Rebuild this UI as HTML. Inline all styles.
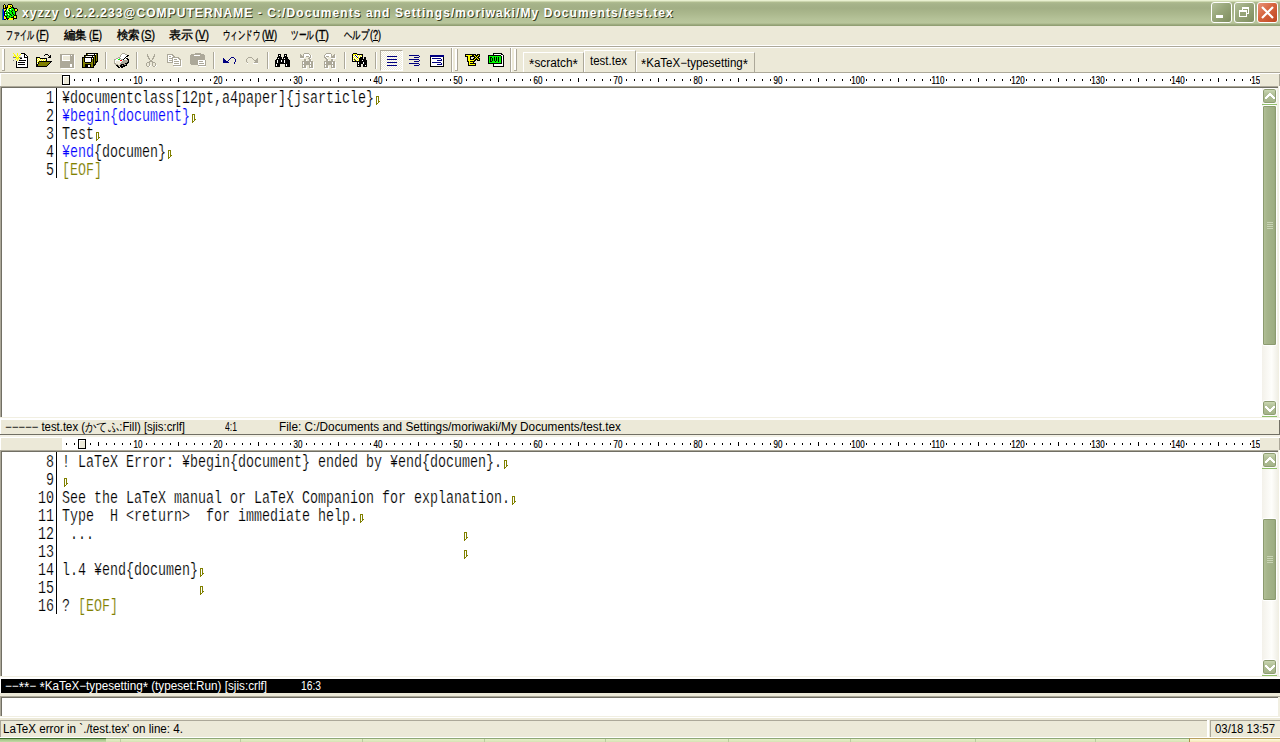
<!DOCTYPE html><html><head><meta charset="utf-8"><style>
*{box-sizing:border-box}
html,body{margin:0;padding:0}
body{width:1280px;height:742px;overflow:hidden;position:relative;background:#ECE9D8;font-family:"Liberation Sans",sans-serif;}
.a{position:absolute}
#title{left:0;top:0;width:1280px;height:26px;background:linear-gradient(to bottom,#E8F0D0 0px,#E8F0D0 1px,#CBD5AE 1px,#CBD5AE 2px,#B0BD90 2px,#A6B38A 4px,#A2AF85 8px,#AAB78C 13px,#B5C298 19px,#B9C69C 23px,#A8B58A 24px,#94A276 25px,#8E9C70 26px)}
#ttext{left:22px;top:6px;color:#fff;font-weight:bold;font-size:12px;line-height:14px;white-space:nowrap;text-shadow:1px 1px 0 #3C3F1E;letter-spacing:1.08px}
.menu{top:28px;font-size:12px;line-height:14px;color:#000;-webkit-text-stroke:0.35px #000;white-space:nowrap;transform-origin:0 0}
.hl{left:0;width:1280px;height:1px}
.ui{font-size:12px;line-height:14px;white-space:nowrap;transform-origin:0 0}
.code{font-family:"Liberation Mono",monospace;font-size:19px;line-height:18px;white-space:pre;color:#000;transform-origin:0 0;-webkit-text-stroke:0.2px #fff}
.st{position:relative;top:2px;font-size:14px;line-height:0}
.rl{font-size:10px;line-height:10px;white-space:nowrap;color:#000;-webkit-text-stroke:0.2px #000;transform-origin:50% 0}
</style></head><body>
<div class="a" id="title"></div>
<div class="a" id="ttext">xyzzy 0.2.2.233@COMPUTERNAME - C:/Documents and Settings/moriwaki/My Documents/test.tex</div>
<svg class="a" style="left:2px;top:4px" width="16" height="16" shape-rendering="crispEdges"><rect x="2" y="0" width="1" height="1" fill="#000000"/><rect x="6" y="0" width="4" height="1" fill="#000000"/><rect x="1" y="1" width="1" height="1" fill="#000000"/><rect x="2" y="1" width="1" height="1" fill="#FFFF00"/><rect x="3" y="1" width="1" height="1" fill="#000000"/><rect x="5" y="1" width="1" height="1" fill="#000000"/><rect x="6" y="1" width="4" height="1" fill="#FFFF00"/><rect x="10" y="1" width="1" height="1" fill="#000000"/><rect x="1" y="2" width="1" height="1" fill="#000000"/><rect x="2" y="2" width="1" height="1" fill="#FFFF00"/><rect x="3" y="2" width="1" height="1" fill="#000000"/><rect x="5" y="2" width="1" height="1" fill="#000000"/><rect x="6" y="2" width="2" height="1" fill="#FFFF00"/><rect x="8" y="2" width="1" height="1" fill="#000000"/><rect x="9" y="2" width="1" height="1" fill="#FFFF00"/><rect x="10" y="2" width="1" height="1" fill="#000000"/><rect x="1" y="3" width="1" height="1" fill="#000000"/><rect x="2" y="3" width="1" height="1" fill="#FFFF00"/><rect x="3" y="3" width="3" height="1" fill="#000000"/><rect x="6" y="3" width="3" height="1" fill="#FFFF00"/><rect x="9" y="3" width="3" height="1" fill="#000000"/><rect x="1" y="4" width="4" height="1" fill="#000000"/><rect x="5" y="4" width="2" height="1" fill="#FFFF00"/><rect x="7" y="4" width="2" height="1" fill="#000000"/><rect x="9" y="4" width="2" height="1" fill="#00FF00"/><rect x="11" y="4" width="4" height="1" fill="#000000"/><rect x="0" y="5" width="1" height="1" fill="#008080"/><rect x="1" y="5" width="1" height="1" fill="#0000FF"/><rect x="2" y="5" width="2" height="1" fill="#FFFF00"/><rect x="4" y="5" width="1" height="1" fill="#000000"/><rect x="5" y="5" width="1" height="1" fill="#FFFFFF"/><rect x="6" y="5" width="2" height="1" fill="#00FF00"/><rect x="8" y="5" width="1" height="1" fill="#FFFFFF"/><rect x="9" y="5" width="3" height="1" fill="#00FF00"/><rect x="12" y="5" width="1" height="1" fill="#000000"/><rect x="13" y="5" width="2" height="1" fill="#FFFF00"/><rect x="15" y="5" width="1" height="1" fill="#000000"/><rect x="0" y="6" width="1" height="1" fill="#008080"/><rect x="1" y="6" width="1" height="1" fill="#0000FF"/><rect x="2" y="6" width="1" height="1" fill="#FFFF00"/><rect x="3" y="6" width="1" height="1" fill="#000000"/><rect x="4" y="6" width="1" height="1" fill="#00FF00"/><rect x="5" y="6" width="1" height="1" fill="#FFFFFF"/><rect x="6" y="6" width="1" height="1" fill="#00FF00"/><rect x="7" y="6" width="1" height="1" fill="#000000"/><rect x="8" y="6" width="2" height="1" fill="#00FF00"/><rect x="10" y="6" width="1" height="1" fill="#000000"/><rect x="11" y="6" width="1" height="1" fill="#00FF00"/><rect x="12" y="6" width="1" height="1" fill="#000000"/><rect x="13" y="6" width="2" height="1" fill="#FFFF00"/><rect x="15" y="6" width="1" height="1" fill="#000000"/><rect x="0" y="7" width="1" height="1" fill="#008080"/><rect x="1" y="7" width="1" height="1" fill="#0000FF"/><rect x="2" y="7" width="2" height="1" fill="#000000"/><rect x="4" y="7" width="2" height="1" fill="#00FF00"/><rect x="6" y="7" width="1" height="1" fill="#FFFFFF"/><rect x="7" y="7" width="2" height="1" fill="#00FF00"/><rect x="9" y="7" width="1" height="1" fill="#000000"/><rect x="10" y="7" width="3" height="1" fill="#00FF00"/><rect x="13" y="7" width="2" height="1" fill="#000000"/><rect x="0" y="8" width="1" height="1" fill="#008080"/><rect x="1" y="8" width="1" height="1" fill="#0000FF"/><rect x="2" y="8" width="1" height="1" fill="#000000"/><rect x="3" y="8" width="1" height="1" fill="#FFFFFF"/><rect x="4" y="8" width="2" height="1" fill="#00FF00"/><rect x="6" y="8" width="1" height="1" fill="#000000"/><rect x="7" y="8" width="3" height="1" fill="#00FF00"/><rect x="10" y="8" width="1" height="1" fill="#000000"/><rect x="11" y="8" width="2" height="1" fill="#00FF00"/><rect x="13" y="8" width="1" height="1" fill="#000000"/><rect x="0" y="9" width="1" height="1" fill="#008080"/><rect x="1" y="9" width="1" height="1" fill="#0000FF"/><rect x="2" y="9" width="1" height="1" fill="#000000"/><rect x="3" y="9" width="1" height="1" fill="#00FF00"/><rect x="4" y="9" width="1" height="1" fill="#000000"/><rect x="5" y="9" width="2" height="1" fill="#00FF00"/><rect x="7" y="9" width="1" height="1" fill="#000000"/><rect x="8" y="9" width="2" height="1" fill="#00FF00"/><rect x="10" y="9" width="1" height="1" fill="#000000"/><rect x="11" y="9" width="2" height="1" fill="#00FF00"/><rect x="13" y="9" width="1" height="1" fill="#000000"/><rect x="0" y="10" width="1" height="1" fill="#008080"/><rect x="1" y="10" width="1" height="1" fill="#0000FF"/><rect x="2" y="10" width="1" height="1" fill="#000000"/><rect x="3" y="10" width="1" height="1" fill="#FFFFFF"/><rect x="4" y="10" width="2" height="1" fill="#00FF00"/><rect x="6" y="10" width="1" height="1" fill="#FFFFFF"/><rect x="7" y="10" width="1" height="1" fill="#00FF00"/><rect x="8" y="10" width="1" height="1" fill="#000000"/><rect x="9" y="10" width="2" height="1" fill="#00FF00"/><rect x="11" y="10" width="1" height="1" fill="#000000"/><rect x="12" y="10" width="1" height="1" fill="#00FF00"/><rect x="13" y="10" width="1" height="1" fill="#000000"/><rect x="0" y="11" width="1" height="1" fill="#008080"/><rect x="1" y="11" width="1" height="1" fill="#0000FF"/><rect x="2" y="11" width="1" height="1" fill="#000000"/><rect x="3" y="11" width="2" height="1" fill="#00FF00"/><rect x="5" y="11" width="1" height="1" fill="#000000"/><rect x="6" y="11" width="3" height="1" fill="#00FF00"/><rect x="9" y="11" width="1" height="1" fill="#000000"/><rect x="10" y="11" width="2" height="1" fill="#00FF00"/><rect x="12" y="11" width="3" height="1" fill="#000000"/><rect x="0" y="12" width="1" height="1" fill="#008080"/><rect x="1" y="12" width="1" height="1" fill="#0000FF"/><rect x="2" y="12" width="1" height="1" fill="#FFFF00"/><rect x="3" y="12" width="2" height="1" fill="#000000"/><rect x="5" y="12" width="2" height="1" fill="#00FF00"/><rect x="7" y="12" width="1" height="1" fill="#000000"/><rect x="8" y="12" width="3" height="1" fill="#00FF00"/><rect x="11" y="12" width="1" height="1" fill="#000000"/><rect x="12" y="12" width="2" height="1" fill="#FFFF00"/><rect x="14" y="12" width="1" height="1" fill="#000000"/><rect x="0" y="13" width="1" height="1" fill="#008080"/><rect x="1" y="13" width="1" height="1" fill="#0000FF"/><rect x="2" y="13" width="2" height="1" fill="#FFFF00"/><rect x="4" y="13" width="1" height="1" fill="#000000"/><rect x="5" y="13" width="4" height="1" fill="#00FF00"/><rect x="9" y="13" width="3" height="1" fill="#000000"/><rect x="12" y="13" width="2" height="1" fill="#FFFF00"/><rect x="14" y="13" width="1" height="1" fill="#000000"/><rect x="0" y="14" width="1" height="1" fill="#008080"/><rect x="1" y="14" width="1" height="1" fill="#0000FF"/><rect x="2" y="14" width="2" height="1" fill="#FFFF00"/><rect x="4" y="14" width="3" height="1" fill="#000000"/><rect x="7" y="14" width="4" height="1" fill="#FFFF00"/><rect x="11" y="14" width="4" height="1" fill="#000000"/><rect x="0" y="15" width="1" height="1" fill="#008080"/><rect x="1" y="15" width="1" height="1" fill="#0000FF"/><rect x="2" y="15" width="2" height="1" fill="#000000"/><rect x="5" y="15" width="1" height="1" fill="#000000"/><rect x="6" y="15" width="5" height="1" fill="#FFFF00"/><rect x="11" y="15" width="1" height="1" fill="#000000"/></svg>
<div class="a" style="left:1211px;top:2px;width:21px;height:21px;border:1px solid #fff;border-radius:3px;background:linear-gradient(135deg,#B3C09A 0%,#9AA87D 40%,#7E8D5E 100%)"></div>
<div class="a" style="left:1234px;top:2px;width:21px;height:21px;border:1px solid #fff;border-radius:3px;background:linear-gradient(135deg,#B3C09A 0%,#9AA87D 40%,#7E8D5E 100%)"></div>
<div class="a" style="left:1257px;top:2px;width:21px;height:21px;border:1px solid #fff;border-radius:3px;background:linear-gradient(135deg,#E8937A 0%,#D6653F 45%,#BF4620 100%)"></div>
<div class="a" style="left:1216px;top:15px;width:7px;height:3px;background:#fff;"></div>
<div class="a" style="left:1242px;top:7px;width:7px;height:7px;border:1px solid #fff;border-top-width:2px"></div>
<div class="a" style="left:1238px;top:9px;width:10px;height:10px;background:transparent;"></div>
<div class="a" style="left:1239px;top:10px;width:8px;height:7px;border:1px solid #fff;border-top-width:2px;background:#95A378"></div>
<svg class="a" style="left:1257px;top:2px" width="21" height="21"><path d="M5 5 L16 16 M16 5 L5 16" stroke="#fff" stroke-width="2.2"/></svg>
<div class="a menu" id="mj0" style="transform:scaleX(0.5833);left:6px">ファイル</div>
<div class="a menu" id="mp0" style="transform:scaleX(0.8473);left:36px">(<u>F</u>)</div>
<div class="a menu" id="mj1" style="transform:scaleX(0.9583);left:64px">編集</div>
<div class="a menu" id="mp1" style="transform:scaleX(0.8117);left:89px">(<u>E</u>)</div>
<div class="a menu" id="mj2" style="transform:scaleX(0.9583);left:117px">検索</div>
<div class="a menu" id="mp2" style="transform:scaleX(0.8741);left:141px">(<u>S</u>)</div>
<div class="a menu" id="mj3" style="transform:scaleX(1.0000);left:169px">表示</div>
<div class="a menu" id="mp3" style="transform:scaleX(0.8741);left:195px">(<u>V</u>)</div>
<div class="a menu" id="mj4" style="transform:scaleX(0.6167);left:223px">ウィンドウ</div>
<div class="a menu" id="mp4" style="transform:scaleX(0.7761);left:262px">(<u>W</u>)</div>
<div class="a menu" id="mj5" style="transform:scaleX(0.6389);left:291px">ツール</div>
<div class="a menu" id="mp5" style="transform:scaleX(0.9124);left:315px">(<u>T</u>)</div>
<div class="a menu" id="mj6" style="transform:scaleX(0.6944);left:344px">ヘルプ</div>
<div class="a menu" id="mp6" style="transform:scaleX(0.7489);left:370px">(<u>?</u>)</div>
<div class="a" style="left:0px;top:45px;width:1280px;height:1px;background:#fff;"></div>
<div class="a" style="left:0px;top:46px;width:1280px;height:1px;background:#ACA899;"></div>
<div class="a" style="left:0px;top:47px;width:1280px;height:1px;background:#fff;"></div>
<div class="a" style="left:0px;top:72px;width:1280px;height:1px;background:#ACA899;"></div>
<div class="a" style="left:0px;top:73px;width:1280px;height:1px;background:#fff;"></div>
<div class="a" style="left:2px;top:49px;width:2px;height:21px;background:#fff;"></div>
<div class="a" style="left:4px;top:49px;width:1px;height:22px;background:#ACA899;"></div>
<div class="a" style="left:2px;top:70px;width:3px;height:1px;background:#ACA899;"></div>
<div class="a" style="left:105px;top:52px;width:1px;height:17px;background:#ACA899;"></div>
<div class="a" style="left:106px;top:52px;width:1px;height:17px;background:#fff;"></div>
<div class="a" style="left:136px;top:52px;width:1px;height:17px;background:#ACA899;"></div>
<div class="a" style="left:137px;top:52px;width:1px;height:17px;background:#fff;"></div>
<div class="a" style="left:213px;top:52px;width:1px;height:17px;background:#ACA899;"></div>
<div class="a" style="left:214px;top:52px;width:1px;height:17px;background:#fff;"></div>
<div class="a" style="left:267px;top:52px;width:1px;height:17px;background:#ACA899;"></div>
<div class="a" style="left:268px;top:52px;width:1px;height:17px;background:#fff;"></div>
<div class="a" style="left:344px;top:52px;width:1px;height:17px;background:#ACA899;"></div>
<div class="a" style="left:345px;top:52px;width:1px;height:17px;background:#fff;"></div>
<div class="a" style="left:375px;top:52px;width:1px;height:17px;background:#ACA899;"></div>
<div class="a" style="left:376px;top:52px;width:1px;height:17px;background:#fff;"></div>
<div class="a" style="left:380px;top:50px;width:23px;height:21px;border-top:1px solid #ACA899;border-left:1px solid #ACA899;border-right:1px solid #fff;border-bottom:1px solid #fff;background-color:#F6F5EF;background-image:repeating-conic-gradient(#ECE9D8 0 25%,#fff 0 50%);background-size:2px 2px"></div>
<div class="a" style="left:451px;top:48px;width:1px;height:24px;background:#ACA899;"></div>
<div class="a" style="left:452px;top:48px;width:1px;height:24px;background:#fff;"></div>
<div class="a" style="left:455px;top:49px;width:2px;height:21px;background:#fff;"></div>
<div class="a" style="left:457px;top:49px;width:1px;height:22px;background:#ACA899;"></div>
<div class="a" style="left:455px;top:70px;width:3px;height:1px;background:#ACA899;"></div>
<div class="a" style="left:510px;top:48px;width:1px;height:24px;background:#ACA899;"></div>
<div class="a" style="left:511px;top:48px;width:1px;height:24px;background:#fff;"></div>
<div class="a" style="left:514px;top:49px;width:2px;height:21px;background:#fff;"></div>
<div class="a" style="left:516px;top:49px;width:1px;height:22px;background:#ACA899;"></div>
<div class="a" style="left:514px;top:70px;width:3px;height:1px;background:#ACA899;"></div>
<svg class="a" style="left:12px;top:52px" width="16" height="16" shape-rendering="crispEdges"><rect x="1" y="1" width="1" height="1" fill="#FFFF00"/><rect x="5" y="1" width="1" height="1" fill="#FFFF00"/><rect x="9" y="1" width="4" height="1" fill="#000000"/><rect x="2" y="2" width="1" height="1" fill="#FFFF00"/><rect x="5" y="2" width="1" height="1" fill="#FFFF00"/><rect x="8" y="2" width="1" height="1" fill="#FFFF00"/><rect x="9" y="2" width="3" height="1" fill="#FFFFFF"/><rect x="12" y="2" width="2" height="1" fill="#000000"/><rect x="2" y="3" width="2" height="1" fill="#FFFF00"/><rect x="5" y="3" width="1" height="1" fill="#FFFF00"/><rect x="7" y="3" width="1" height="1" fill="#FFFF00"/><rect x="9" y="3" width="3" height="1" fill="#FFFFFF"/><rect x="12" y="3" width="1" height="1" fill="#000000"/><rect x="13" y="3" width="1" height="1" fill="#FFFFFF"/><rect x="14" y="3" width="1" height="1" fill="#000000"/><rect x="1" y="4" width="1" height="1" fill="#FFFF00"/><rect x="3" y="4" width="2" height="1" fill="#FFFF00"/><rect x="6" y="4" width="1" height="1" fill="#FFFF00"/><rect x="9" y="4" width="3" height="1" fill="#FFFFFF"/><rect x="12" y="4" width="1" height="1" fill="#000000"/><rect x="13" y="4" width="2" height="1" fill="#FFFFFF"/><rect x="15" y="4" width="1" height="1" fill="#000000"/><rect x="1" y="5" width="3" height="1" fill="#808080"/><rect x="4" y="5" width="3" height="1" fill="#FFFF00"/><rect x="7" y="5" width="3" height="1" fill="#808080"/><rect x="10" y="5" width="2" height="1" fill="#FFFFFF"/><rect x="12" y="5" width="4" height="1" fill="#000000"/><rect x="4" y="6" width="3" height="1" fill="#FFFF00"/><rect x="8" y="6" width="2" height="1" fill="#000000"/><rect x="10" y="6" width="5" height="1" fill="#FFFFFF"/><rect x="15" y="6" width="1" height="1" fill="#000000"/><rect x="3" y="7" width="1" height="1" fill="#FFFF00"/><rect x="5" y="7" width="1" height="1" fill="#FFFF00"/><rect x="7" y="7" width="1" height="1" fill="#FFFF00"/><rect x="9" y="7" width="6" height="1" fill="#FFFFFF"/><rect x="15" y="7" width="1" height="1" fill="#000000"/><rect x="1" y="8" width="1" height="1" fill="#808080"/><rect x="5" y="8" width="1" height="1" fill="#FFFF00"/><rect x="7" y="8" width="7" height="1" fill="#000000"/><rect x="14" y="8" width="1" height="1" fill="#FFFFFF"/><rect x="15" y="8" width="1" height="1" fill="#000000"/><rect x="4" y="9" width="1" height="1" fill="#000000"/><rect x="5" y="9" width="10" height="1" fill="#FFFFFF"/><rect x="15" y="9" width="1" height="1" fill="#000000"/><rect x="4" y="10" width="1" height="1" fill="#000000"/><rect x="5" y="10" width="1" height="1" fill="#FFFFFF"/><rect x="6" y="10" width="7" height="1" fill="#000000"/><rect x="13" y="10" width="2" height="1" fill="#FFFFFF"/><rect x="15" y="10" width="1" height="1" fill="#000000"/><rect x="4" y="11" width="1" height="1" fill="#000000"/><rect x="5" y="11" width="10" height="1" fill="#FFFFFF"/><rect x="15" y="11" width="1" height="1" fill="#000000"/><rect x="4" y="12" width="1" height="1" fill="#000000"/><rect x="5" y="12" width="1" height="1" fill="#FFFFFF"/><rect x="6" y="12" width="7" height="1" fill="#000000"/><rect x="13" y="12" width="2" height="1" fill="#FFFFFF"/><rect x="15" y="12" width="1" height="1" fill="#000000"/><rect x="4" y="13" width="1" height="1" fill="#000000"/><rect x="5" y="13" width="10" height="1" fill="#FFFFFF"/><rect x="15" y="13" width="1" height="1" fill="#000000"/><rect x="4" y="14" width="1" height="1" fill="#000000"/><rect x="5" y="14" width="10" height="1" fill="#FFFFFF"/><rect x="15" y="14" width="1" height="1" fill="#000000"/><rect x="4" y="15" width="12" height="1" fill="#000000"/></svg>
<svg class="a" style="left:36px;top:52px" width="16" height="16" shape-rendering="crispEdges"><rect x="9" y="2" width="3" height="1" fill="#000000"/><rect x="8" y="3" width="1" height="1" fill="#000000"/><rect x="12" y="3" width="1" height="1" fill="#000000"/><rect x="14" y="3" width="1" height="1" fill="#000000"/><rect x="13" y="4" width="2" height="1" fill="#000000"/><rect x="0" y="5" width="4" height="1" fill="#000000"/><rect x="12" y="5" width="3" height="1" fill="#000000"/><rect x="0" y="6" width="1" height="1" fill="#000000"/><rect x="1" y="6" width="1" height="1" fill="#FFFF00"/><rect x="2" y="6" width="1" height="1" fill="#FFFFFF"/><rect x="3" y="6" width="1" height="1" fill="#FFFF00"/><rect x="4" y="6" width="7" height="1" fill="#000000"/><rect x="0" y="7" width="1" height="1" fill="#000000"/><rect x="1" y="7" width="1" height="1" fill="#FFFFFF"/><rect x="2" y="7" width="1" height="1" fill="#FFFF00"/><rect x="3" y="7" width="1" height="1" fill="#FFFFFF"/><rect x="4" y="7" width="1" height="1" fill="#FFFF00"/><rect x="5" y="7" width="1" height="1" fill="#FFFFFF"/><rect x="6" y="7" width="1" height="1" fill="#FFFF00"/><rect x="7" y="7" width="1" height="1" fill="#FFFFFF"/><rect x="8" y="7" width="1" height="1" fill="#FFFF00"/><rect x="9" y="7" width="1" height="1" fill="#FFFFFF"/><rect x="10" y="7" width="1" height="1" fill="#000000"/><rect x="0" y="8" width="1" height="1" fill="#000000"/><rect x="1" y="8" width="1" height="1" fill="#FFFF00"/><rect x="2" y="8" width="1" height="1" fill="#FFFFFF"/><rect x="3" y="8" width="1" height="1" fill="#FFFF00"/><rect x="4" y="8" width="1" height="1" fill="#FFFFFF"/><rect x="5" y="8" width="1" height="1" fill="#FFFF00"/><rect x="6" y="8" width="1" height="1" fill="#FFFFFF"/><rect x="7" y="8" width="1" height="1" fill="#FFFF00"/><rect x="8" y="8" width="1" height="1" fill="#FFFFFF"/><rect x="9" y="8" width="1" height="1" fill="#FFFF00"/><rect x="10" y="8" width="1" height="1" fill="#000000"/><rect x="0" y="9" width="1" height="1" fill="#000000"/><rect x="1" y="9" width="1" height="1" fill="#FFFFFF"/><rect x="2" y="9" width="1" height="1" fill="#FFFF00"/><rect x="3" y="9" width="13" height="1" fill="#000000"/><rect x="0" y="10" width="1" height="1" fill="#000000"/><rect x="1" y="10" width="1" height="1" fill="#FFFF00"/><rect x="2" y="10" width="1" height="1" fill="#000000"/><rect x="3" y="10" width="11" height="1" fill="#808000"/><rect x="14" y="10" width="1" height="1" fill="#000000"/><rect x="0" y="11" width="1" height="1" fill="#000000"/><rect x="1" y="11" width="1" height="1" fill="#FFFFFF"/><rect x="2" y="11" width="1" height="1" fill="#000000"/><rect x="3" y="11" width="10" height="1" fill="#808000"/><rect x="13" y="11" width="1" height="1" fill="#000000"/><rect x="0" y="12" width="2" height="1" fill="#000000"/><rect x="2" y="12" width="10" height="1" fill="#808000"/><rect x="12" y="12" width="1" height="1" fill="#000000"/><rect x="0" y="13" width="2" height="1" fill="#000000"/><rect x="2" y="13" width="9" height="1" fill="#808000"/><rect x="11" y="13" width="1" height="1" fill="#000000"/><rect x="0" y="14" width="11" height="1" fill="#000000"/></svg>
<svg class="a" style="left:59px;top:52px" width="16" height="17" shape-rendering="crispEdges"><rect x="1" y="2" width="14" height="1" fill="#ACA899"/><rect x="1" y="3" width="2" height="1" fill="#ACA899"/><rect x="3" y="3" width="8" height="1" fill="#FFFFFF"/><rect x="11" y="3" width="1" height="1" fill="#ACA899"/><rect x="12" y="3" width="1" height="1" fill="#FFFFFF"/><rect x="13" y="3" width="2" height="1" fill="#ACA899"/><rect x="15" y="3" width="1" height="1" fill="#FFFFFF"/><rect x="1" y="4" width="2" height="1" fill="#ACA899"/><rect x="3" y="4" width="1" height="1" fill="#FFFFFF"/><rect x="4" y="4" width="7" height="1" fill="#ECE9D8"/><rect x="11" y="4" width="4" height="1" fill="#ACA899"/><rect x="15" y="4" width="1" height="1" fill="#FFFFFF"/><rect x="1" y="5" width="2" height="1" fill="#ACA899"/><rect x="3" y="5" width="1" height="1" fill="#FFFFFF"/><rect x="4" y="5" width="7" height="1" fill="#ECE9D8"/><rect x="11" y="5" width="4" height="1" fill="#ACA899"/><rect x="15" y="5" width="1" height="1" fill="#FFFFFF"/><rect x="1" y="6" width="2" height="1" fill="#ACA899"/><rect x="3" y="6" width="1" height="1" fill="#FFFFFF"/><rect x="4" y="6" width="7" height="1" fill="#ECE9D8"/><rect x="11" y="6" width="4" height="1" fill="#ACA899"/><rect x="15" y="6" width="1" height="1" fill="#FFFFFF"/><rect x="1" y="7" width="2" height="1" fill="#ACA899"/><rect x="3" y="7" width="1" height="1" fill="#FFFFFF"/><rect x="4" y="7" width="7" height="1" fill="#ECE9D8"/><rect x="11" y="7" width="4" height="1" fill="#ACA899"/><rect x="15" y="7" width="1" height="1" fill="#FFFFFF"/><rect x="1" y="8" width="2" height="1" fill="#ACA899"/><rect x="3" y="8" width="8" height="1" fill="#FFFFFF"/><rect x="11" y="8" width="4" height="1" fill="#ACA899"/><rect x="15" y="8" width="1" height="1" fill="#FFFFFF"/><rect x="1" y="9" width="14" height="1" fill="#ACA899"/><rect x="15" y="9" width="1" height="1" fill="#FFFFFF"/><rect x="1" y="10" width="14" height="1" fill="#ACA899"/><rect x="15" y="10" width="1" height="1" fill="#FFFFFF"/><rect x="1" y="11" width="14" height="1" fill="#ACA899"/><rect x="15" y="11" width="1" height="1" fill="#FFFFFF"/><rect x="1" y="12" width="10" height="1" fill="#ACA899"/><rect x="11" y="12" width="2" height="1" fill="#FFFFFF"/><rect x="13" y="12" width="2" height="1" fill="#ACA899"/><rect x="15" y="12" width="1" height="1" fill="#FFFFFF"/><rect x="1" y="13" width="10" height="1" fill="#ACA899"/><rect x="11" y="13" width="2" height="1" fill="#FFFFFF"/><rect x="13" y="13" width="2" height="1" fill="#ACA899"/><rect x="15" y="13" width="1" height="1" fill="#FFFFFF"/><rect x="1" y="14" width="10" height="1" fill="#ACA899"/><rect x="11" y="14" width="2" height="1" fill="#FFFFFF"/><rect x="13" y="14" width="2" height="1" fill="#ACA899"/><rect x="15" y="14" width="1" height="1" fill="#FFFFFF"/><rect x="1" y="15" width="14" height="1" fill="#ACA899"/><rect x="15" y="15" width="1" height="1" fill="#FFFFFF"/><rect x="2" y="16" width="14" height="1" fill="#FFFFFF"/></svg>
<svg class="a" style="left:82px;top:52px" width="16" height="16" shape-rendering="crispEdges"><rect x="4" y="1" width="12" height="1" fill="#000000"/><rect x="4" y="2" width="1" height="1" fill="#000000"/><rect x="5" y="2" width="1" height="1" fill="#808000"/><rect x="6" y="2" width="6" height="1" fill="#FFFFFF"/><rect x="12" y="2" width="1" height="1" fill="#000000"/><rect x="13" y="2" width="1" height="1" fill="#FFFFFF"/><rect x="14" y="2" width="1" height="1" fill="#808000"/><rect x="15" y="2" width="1" height="1" fill="#000000"/><rect x="2" y="3" width="12" height="1" fill="#000000"/><rect x="14" y="3" width="1" height="1" fill="#808000"/><rect x="15" y="3" width="1" height="1" fill="#000000"/><rect x="2" y="4" width="1" height="1" fill="#000000"/><rect x="3" y="4" width="1" height="1" fill="#808000"/><rect x="4" y="4" width="6" height="1" fill="#FFFFFF"/><rect x="10" y="4" width="1" height="1" fill="#000000"/><rect x="11" y="4" width="1" height="1" fill="#FFFFFF"/><rect x="12" y="4" width="1" height="1" fill="#808000"/><rect x="13" y="4" width="1" height="1" fill="#000000"/><rect x="14" y="4" width="1" height="1" fill="#808000"/><rect x="15" y="4" width="1" height="1" fill="#000000"/><rect x="0" y="5" width="12" height="1" fill="#000000"/><rect x="12" y="5" width="1" height="1" fill="#808000"/><rect x="13" y="5" width="1" height="1" fill="#000000"/><rect x="14" y="5" width="1" height="1" fill="#808000"/><rect x="15" y="5" width="1" height="1" fill="#000000"/><rect x="0" y="6" width="1" height="1" fill="#000000"/><rect x="1" y="6" width="1" height="1" fill="#808000"/><rect x="2" y="6" width="1" height="1" fill="#000000"/><rect x="3" y="6" width="6" height="1" fill="#FFFFFF"/><rect x="9" y="6" width="1" height="1" fill="#000000"/><rect x="10" y="6" width="1" height="1" fill="#FFFFFF"/><rect x="11" y="6" width="1" height="1" fill="#000000"/><rect x="12" y="6" width="1" height="1" fill="#808000"/><rect x="13" y="6" width="1" height="1" fill="#000000"/><rect x="14" y="6" width="1" height="1" fill="#808000"/><rect x="15" y="6" width="1" height="1" fill="#000000"/><rect x="0" y="7" width="1" height="1" fill="#000000"/><rect x="1" y="7" width="1" height="1" fill="#808000"/><rect x="2" y="7" width="1" height="1" fill="#000000"/><rect x="3" y="7" width="6" height="1" fill="#FFFFFF"/><rect x="9" y="7" width="1" height="1" fill="#000000"/><rect x="10" y="7" width="1" height="1" fill="#808000"/><rect x="11" y="7" width="1" height="1" fill="#000000"/><rect x="12" y="7" width="1" height="1" fill="#808000"/><rect x="13" y="7" width="1" height="1" fill="#000000"/><rect x="14" y="7" width="1" height="1" fill="#808000"/><rect x="15" y="7" width="1" height="1" fill="#000000"/><rect x="0" y="8" width="1" height="1" fill="#000000"/><rect x="1" y="8" width="1" height="1" fill="#808000"/><rect x="2" y="8" width="1" height="1" fill="#000000"/><rect x="3" y="8" width="6" height="1" fill="#FFFFFF"/><rect x="9" y="8" width="1" height="1" fill="#000000"/><rect x="10" y="8" width="1" height="1" fill="#808000"/><rect x="11" y="8" width="1" height="1" fill="#000000"/><rect x="12" y="8" width="1" height="1" fill="#808000"/><rect x="13" y="8" width="1" height="1" fill="#000000"/><rect x="14" y="8" width="1" height="1" fill="#808000"/><rect x="15" y="8" width="1" height="1" fill="#000000"/><rect x="0" y="9" width="1" height="1" fill="#000000"/><rect x="1" y="9" width="1" height="1" fill="#808000"/><rect x="2" y="9" width="1" height="1" fill="#000000"/><rect x="3" y="9" width="6" height="1" fill="#FFFFFF"/><rect x="9" y="9" width="1" height="1" fill="#000000"/><rect x="10" y="9" width="1" height="1" fill="#808000"/><rect x="11" y="9" width="1" height="1" fill="#000000"/><rect x="12" y="9" width="1" height="1" fill="#808000"/><rect x="13" y="9" width="3" height="1" fill="#000000"/><rect x="0" y="10" width="1" height="1" fill="#000000"/><rect x="1" y="10" width="2" height="1" fill="#808000"/><rect x="3" y="10" width="6" height="1" fill="#000000"/><rect x="9" y="10" width="2" height="1" fill="#808000"/><rect x="11" y="10" width="1" height="1" fill="#000000"/><rect x="12" y="10" width="1" height="1" fill="#808000"/><rect x="13" y="10" width="2" height="1" fill="#000000"/><rect x="0" y="11" width="1" height="1" fill="#000000"/><rect x="1" y="11" width="10" height="1" fill="#808000"/><rect x="11" y="11" width="1" height="1" fill="#000000"/><rect x="12" y="11" width="1" height="1" fill="#808000"/><rect x="13" y="11" width="1" height="1" fill="#000000"/><rect x="0" y="12" width="1" height="1" fill="#000000"/><rect x="1" y="12" width="2" height="1" fill="#808000"/><rect x="3" y="12" width="6" height="1" fill="#000000"/><rect x="9" y="12" width="2" height="1" fill="#808000"/><rect x="11" y="12" width="3" height="1" fill="#000000"/><rect x="0" y="13" width="1" height="1" fill="#000000"/><rect x="1" y="13" width="2" height="1" fill="#808000"/><rect x="3" y="13" width="3" height="1" fill="#000000"/><rect x="6" y="13" width="2" height="1" fill="#FFFFFF"/><rect x="8" y="13" width="1" height="1" fill="#000000"/><rect x="9" y="13" width="2" height="1" fill="#808000"/><rect x="11" y="13" width="2" height="1" fill="#000000"/><rect x="0" y="14" width="1" height="1" fill="#000000"/><rect x="1" y="14" width="2" height="1" fill="#808000"/><rect x="3" y="14" width="3" height="1" fill="#000000"/><rect x="6" y="14" width="2" height="1" fill="#FFFFFF"/><rect x="8" y="14" width="1" height="1" fill="#000000"/><rect x="9" y="14" width="2" height="1" fill="#808000"/><rect x="11" y="14" width="1" height="1" fill="#000000"/><rect x="0" y="15" width="12" height="1" fill="#000000"/></svg>
<svg class="a" style="left:113px;top:52px" width="16" height="16" shape-rendering="crispEdges"><rect x="9" y="1" width="3" height="1" fill="#ACA899"/><rect x="8" y="2" width="1" height="1" fill="#ACA899"/><rect x="9" y="2" width="3" height="1" fill="#FFFFFF"/><rect x="12" y="2" width="2" height="1" fill="#ACA899"/><rect x="7" y="3" width="1" height="1" fill="#ACA899"/><rect x="8" y="3" width="6" height="1" fill="#FFFFFF"/><rect x="14" y="3" width="2" height="1" fill="#000000"/><rect x="7" y="4" width="1" height="1" fill="#ACA899"/><rect x="8" y="4" width="5" height="1" fill="#FFFFFF"/><rect x="13" y="4" width="2" height="1" fill="#000000"/><rect x="5" y="5" width="2" height="1" fill="#ACA899"/><rect x="7" y="5" width="5" height="1" fill="#FFFFFF"/><rect x="12" y="5" width="1" height="1" fill="#000000"/><rect x="13" y="5" width="1" height="1" fill="#FFFFFF"/><rect x="3" y="6" width="2" height="1" fill="#ACA899"/><rect x="5" y="6" width="1" height="1" fill="#FFFFFF"/><rect x="6" y="6" width="2" height="1" fill="#ACA899"/><rect x="8" y="6" width="3" height="1" fill="#FFFFFF"/><rect x="11" y="6" width="1" height="1" fill="#000000"/><rect x="13" y="6" width="2" height="1" fill="#000000"/><rect x="1" y="7" width="2" height="1" fill="#ACA899"/><rect x="3" y="7" width="2" height="1" fill="#FFFFFF"/><rect x="5" y="7" width="2" height="1" fill="#00FF00"/><rect x="7" y="7" width="1" height="1" fill="#FFFFFF"/><rect x="8" y="7" width="2" height="1" fill="#ACA899"/><rect x="10" y="7" width="1" height="1" fill="#000000"/><rect x="11" y="7" width="3" height="1" fill="#FFFFFF"/><rect x="14" y="7" width="2" height="1" fill="#000000"/><rect x="1" y="8" width="1" height="1" fill="#ACA899"/><rect x="2" y="8" width="5" height="1" fill="#FFFFFF"/><rect x="7" y="8" width="2" height="1" fill="#FF0000"/><rect x="9" y="8" width="1" height="1" fill="#FFFFFF"/><rect x="10" y="8" width="5" height="1" fill="#ACA899"/><rect x="15" y="8" width="1" height="1" fill="#000000"/><rect x="1" y="9" width="1" height="1" fill="#ACA899"/><rect x="2" y="9" width="1" height="1" fill="#FFFFFF"/><rect x="3" y="9" width="4" height="1" fill="#ECE9D8"/><rect x="7" y="9" width="2" height="1" fill="#FFFFFF"/><rect x="9" y="9" width="6" height="1" fill="#ACA899"/><rect x="15" y="9" width="1" height="1" fill="#000000"/><rect x="1" y="10" width="1" height="1" fill="#ACA899"/><rect x="2" y="10" width="1" height="1" fill="#FFFFFF"/><rect x="3" y="10" width="4" height="1" fill="#ECE9D8"/><rect x="7" y="10" width="1" height="1" fill="#FFFFFF"/><rect x="8" y="10" width="6" height="1" fill="#ACA899"/><rect x="14" y="10" width="2" height="1" fill="#000000"/><rect x="1" y="11" width="2" height="1" fill="#ACA899"/><rect x="3" y="11" width="4" height="1" fill="#ECE9D8"/><rect x="7" y="11" width="5" height="1" fill="#ACA899"/><rect x="12" y="11" width="3" height="1" fill="#000000"/><rect x="2" y="12" width="3" height="1" fill="#ACA899"/><rect x="5" y="12" width="2" height="1" fill="#ECE9D8"/><rect x="7" y="12" width="1" height="1" fill="#ACA899"/><rect x="8" y="12" width="3" height="1" fill="#000000"/><rect x="11" y="12" width="2" height="1" fill="#ACA899"/><rect x="13" y="12" width="1" height="1" fill="#000000"/><rect x="3" y="13" width="2" height="1" fill="#000000"/><rect x="5" y="13" width="2" height="1" fill="#ACA899"/><rect x="7" y="13" width="2" height="1" fill="#000000"/><rect x="9" y="13" width="1" height="1" fill="#ACA899"/><rect x="10" y="13" width="4" height="1" fill="#000000"/><rect x="4" y="14" width="2" height="1" fill="#000000"/><rect x="7" y="14" width="5" height="1" fill="#000000"/><rect x="5" y="15" width="2" height="1" fill="#000000"/><rect x="8" y="15" width="2" height="1" fill="#000000"/></svg>
<svg class="a" style="left:144px;top:52px" width="16" height="16" shape-rendering="crispEdges"><rect x="3" y="2" width="1" height="1" fill="#ACA899"/><rect x="10" y="2" width="1" height="1" fill="#ACA899"/><rect x="3" y="3" width="1" height="1" fill="#ACA899"/><rect x="10" y="3" width="1" height="1" fill="#ACA899"/><rect x="3" y="4" width="2" height="1" fill="#ACA899"/><rect x="9" y="4" width="2" height="1" fill="#ACA899"/><rect x="4" y="5" width="1" height="1" fill="#ACA899"/><rect x="9" y="5" width="1" height="1" fill="#ACA899"/><rect x="4" y="6" width="2" height="1" fill="#ACA899"/><rect x="8" y="6" width="2" height="1" fill="#ACA899"/><rect x="5" y="7" width="1" height="1" fill="#ACA899"/><rect x="8" y="7" width="1" height="1" fill="#ACA899"/><rect x="6" y="8" width="2" height="1" fill="#ACA899"/><rect x="5" y="9" width="4" height="1" fill="#ACA899"/><rect x="3" y="10" width="3" height="1" fill="#ACA899"/><rect x="8" y="10" width="3" height="1" fill="#ACA899"/><rect x="2" y="11" width="1" height="1" fill="#ACA899"/><rect x="5" y="11" width="1" height="1" fill="#ACA899"/><rect x="8" y="11" width="1" height="1" fill="#ACA899"/><rect x="11" y="11" width="1" height="1" fill="#ACA899"/><rect x="2" y="12" width="1" height="1" fill="#ACA899"/><rect x="5" y="12" width="1" height="1" fill="#ACA899"/><rect x="8" y="12" width="1" height="1" fill="#ACA899"/><rect x="11" y="12" width="1" height="1" fill="#ACA899"/><rect x="2" y="13" width="1" height="1" fill="#ACA899"/><rect x="5" y="13" width="1" height="1" fill="#ACA899"/><rect x="6" y="13" width="1" height="1" fill="#FFFFFF"/><rect x="8" y="13" width="1" height="1" fill="#ACA899"/><rect x="11" y="13" width="1" height="1" fill="#ACA899"/><rect x="12" y="13" width="1" height="1" fill="#FFFFFF"/><rect x="3" y="14" width="2" height="1" fill="#ACA899"/><rect x="5" y="14" width="1" height="1" fill="#FFFFFF"/><rect x="9" y="14" width="2" height="1" fill="#ACA899"/><rect x="11" y="14" width="1" height="1" fill="#FFFFFF"/></svg>
<svg class="a" style="left:167px;top:52px" width="16" height="16" shape-rendering="crispEdges"><rect x="0" y="2" width="6" height="1" fill="#ACA899"/><rect x="0" y="3" width="1" height="1" fill="#ACA899"/><rect x="1" y="3" width="4" height="1" fill="#FFFFFF"/><rect x="5" y="3" width="2" height="1" fill="#ACA899"/><rect x="0" y="4" width="1" height="1" fill="#ACA899"/><rect x="1" y="4" width="1" height="1" fill="#FFFFFF"/><rect x="2" y="4" width="2" height="1" fill="#ACA899"/><rect x="4" y="4" width="2" height="1" fill="#FFFFFF"/><rect x="6" y="4" width="2" height="1" fill="#ACA899"/><rect x="0" y="5" width="1" height="1" fill="#ACA899"/><rect x="1" y="5" width="4" height="1" fill="#FFFFFF"/><rect x="5" y="5" width="7" height="1" fill="#ACA899"/><rect x="0" y="6" width="1" height="1" fill="#ACA899"/><rect x="1" y="6" width="1" height="1" fill="#FFFFFF"/><rect x="2" y="6" width="4" height="1" fill="#ACA899"/><rect x="6" y="6" width="5" height="1" fill="#FFFFFF"/><rect x="11" y="6" width="2" height="1" fill="#ACA899"/><rect x="0" y="7" width="1" height="1" fill="#ACA899"/><rect x="1" y="7" width="4" height="1" fill="#FFFFFF"/><rect x="5" y="7" width="1" height="1" fill="#ACA899"/><rect x="6" y="7" width="1" height="1" fill="#FFFFFF"/><rect x="7" y="7" width="3" height="1" fill="#ACA899"/><rect x="10" y="7" width="2" height="1" fill="#FFFFFF"/><rect x="12" y="7" width="2" height="1" fill="#ACA899"/><rect x="0" y="8" width="1" height="1" fill="#ACA899"/><rect x="1" y="8" width="1" height="1" fill="#FFFFFF"/><rect x="2" y="8" width="4" height="1" fill="#ACA899"/><rect x="6" y="8" width="7" height="1" fill="#FFFFFF"/><rect x="13" y="8" width="1" height="1" fill="#ACA899"/><rect x="14" y="8" width="1" height="1" fill="#FFFFFF"/><rect x="0" y="9" width="1" height="1" fill="#ACA899"/><rect x="1" y="9" width="4" height="1" fill="#FFFFFF"/><rect x="5" y="9" width="1" height="1" fill="#ACA899"/><rect x="6" y="9" width="1" height="1" fill="#FFFFFF"/><rect x="7" y="9" width="5" height="1" fill="#ACA899"/><rect x="12" y="9" width="1" height="1" fill="#FFFFFF"/><rect x="13" y="9" width="1" height="1" fill="#ACA899"/><rect x="14" y="9" width="1" height="1" fill="#FFFFFF"/><rect x="0" y="10" width="6" height="1" fill="#ACA899"/><rect x="6" y="10" width="7" height="1" fill="#FFFFFF"/><rect x="13" y="10" width="1" height="1" fill="#ACA899"/><rect x="14" y="10" width="1" height="1" fill="#FFFFFF"/><rect x="6" y="11" width="1" height="1" fill="#FFFFFF"/><rect x="7" y="11" width="5" height="1" fill="#ACA899"/><rect x="12" y="11" width="1" height="1" fill="#FFFFFF"/><rect x="13" y="11" width="1" height="1" fill="#ACA899"/><rect x="14" y="11" width="1" height="1" fill="#FFFFFF"/><rect x="6" y="12" width="7" height="1" fill="#FFFFFF"/><rect x="13" y="12" width="1" height="1" fill="#ACA899"/><rect x="14" y="12" width="1" height="1" fill="#FFFFFF"/><rect x="6" y="13" width="8" height="1" fill="#ACA899"/><rect x="14" y="13" width="1" height="1" fill="#FFFFFF"/><rect x="7" y="14" width="8" height="1" fill="#FFFFFF"/></svg>
<svg class="a" style="left:190px;top:52px" width="16" height="16" shape-rendering="crispEdges"><rect x="5" y="1" width="6" height="1" fill="#ACA899"/><rect x="1" y="2" width="13" height="1" fill="#ACA899"/><rect x="0" y="3" width="4" height="1" fill="#ACA899"/><rect x="4" y="3" width="6" height="1" fill="#FFFFFF"/><rect x="10" y="3" width="5" height="1" fill="#ACA899"/><rect x="0" y="4" width="15" height="1" fill="#ACA899"/><rect x="0" y="5" width="15" height="1" fill="#ACA899"/><rect x="0" y="6" width="15" height="1" fill="#ACA899"/><rect x="0" y="7" width="15" height="1" fill="#ACA899"/><rect x="0" y="8" width="8" height="1" fill="#ACA899"/><rect x="8" y="8" width="7" height="1" fill="#FFFFFF"/><rect x="15" y="8" width="1" height="1" fill="#ACA899"/><rect x="0" y="9" width="8" height="1" fill="#ACA899"/><rect x="8" y="9" width="1" height="1" fill="#FFFFFF"/><rect x="9" y="9" width="4" height="1" fill="#ACA899"/><rect x="13" y="9" width="2" height="1" fill="#FFFFFF"/><rect x="15" y="9" width="1" height="1" fill="#ACA899"/><rect x="0" y="10" width="8" height="1" fill="#ACA899"/><rect x="8" y="10" width="7" height="1" fill="#FFFFFF"/><rect x="15" y="10" width="1" height="1" fill="#ACA899"/><rect x="0" y="11" width="8" height="1" fill="#ACA899"/><rect x="8" y="11" width="1" height="1" fill="#FFFFFF"/><rect x="9" y="11" width="5" height="1" fill="#ACA899"/><rect x="14" y="11" width="1" height="1" fill="#FFFFFF"/><rect x="15" y="11" width="1" height="1" fill="#ACA899"/><rect x="1" y="12" width="7" height="1" fill="#ACA899"/><rect x="8" y="12" width="7" height="1" fill="#FFFFFF"/><rect x="15" y="12" width="1" height="1" fill="#ACA899"/><rect x="8" y="13" width="8" height="1" fill="#ACA899"/><rect x="9" y="14" width="7" height="1" fill="#FFFFFF"/></svg>
<svg class="a" style="left:221px;top:52px" width="16" height="13" shape-rendering="crispEdges"><rect x="10" y="5" width="3" height="1" fill="#000080"/><rect x="2" y="6" width="1" height="1" fill="#000080"/><rect x="9" y="6" width="1" height="1" fill="#000080"/><rect x="13" y="6" width="1" height="1" fill="#000080"/><rect x="2" y="7" width="2" height="1" fill="#000080"/><rect x="8" y="7" width="1" height="1" fill="#000080"/><rect x="14" y="7" width="1" height="1" fill="#000080"/><rect x="2" y="8" width="3" height="1" fill="#000080"/><rect x="7" y="8" width="1" height="1" fill="#000080"/><rect x="14" y="8" width="1" height="1" fill="#000080"/><rect x="2" y="9" width="5" height="1" fill="#000080"/><rect x="14" y="9" width="1" height="1" fill="#000080"/><rect x="2" y="10" width="6" height="1" fill="#000080"/><rect x="13" y="10" width="1" height="1" fill="#000080"/><rect x="13" y="11" width="1" height="1" fill="#000080"/></svg>
<svg class="a" style="left:244px;top:52px" width="16" height="13" shape-rendering="crispEdges"><rect x="4" y="5" width="4" height="1" fill="#ACA899"/><rect x="3" y="6" width="1" height="1" fill="#ACA899"/><rect x="8" y="6" width="1" height="1" fill="#ACA899"/><rect x="13" y="6" width="1" height="1" fill="#ACA899"/><rect x="2" y="7" width="1" height="1" fill="#ACA899"/><rect x="9" y="7" width="1" height="1" fill="#ACA899"/><rect x="12" y="7" width="2" height="1" fill="#ACA899"/><rect x="2" y="8" width="1" height="1" fill="#ACA899"/><rect x="10" y="8" width="4" height="1" fill="#ACA899"/><rect x="2" y="9" width="1" height="1" fill="#ACA899"/><rect x="11" y="9" width="3" height="1" fill="#ACA899"/><rect x="3" y="10" width="1" height="1" fill="#ACA899"/><rect x="10" y="10" width="4" height="1" fill="#ACA899"/><rect x="3" y="11" width="1" height="1" fill="#FFFFFF"/><rect x="9" y="11" width="5" height="1" fill="#FFFFFF"/></svg>
<svg class="a" style="left:274px;top:52px" width="16" height="15" shape-rendering="crispEdges"><rect x="4" y="2" width="3" height="1" fill="#000000"/><rect x="10" y="2" width="3" height="1" fill="#000000"/><rect x="4" y="3" width="1" height="1" fill="#000000"/><rect x="5" y="3" width="1" height="1" fill="#FFFFFF"/><rect x="6" y="3" width="1" height="1" fill="#000000"/><rect x="10" y="3" width="1" height="1" fill="#000000"/><rect x="11" y="3" width="1" height="1" fill="#FFFFFF"/><rect x="12" y="3" width="1" height="1" fill="#000000"/><rect x="4" y="4" width="3" height="1" fill="#000000"/><rect x="10" y="4" width="3" height="1" fill="#000000"/><rect x="3" y="5" width="5" height="1" fill="#000000"/><rect x="9" y="5" width="5" height="1" fill="#000000"/><rect x="3" y="6" width="1" height="1" fill="#000000"/><rect x="4" y="6" width="1" height="1" fill="#FFFFFF"/><rect x="5" y="6" width="3" height="1" fill="#000000"/><rect x="9" y="6" width="1" height="1" fill="#000000"/><rect x="10" y="6" width="1" height="1" fill="#FFFFFF"/><rect x="11" y="6" width="3" height="1" fill="#000000"/><rect x="2" y="7" width="13" height="1" fill="#000000"/><rect x="1" y="8" width="2" height="1" fill="#000000"/><rect x="3" y="8" width="1" height="1" fill="#FFFFFF"/><rect x="4" y="8" width="3" height="1" fill="#000000"/><rect x="7" y="8" width="1" height="1" fill="#FFFFFF"/><rect x="8" y="8" width="2" height="1" fill="#000000"/><rect x="10" y="8" width="1" height="1" fill="#FFFFFF"/><rect x="11" y="8" width="5" height="1" fill="#000000"/><rect x="1" y="9" width="2" height="1" fill="#000000"/><rect x="3" y="9" width="1" height="1" fill="#FFFFFF"/><rect x="4" y="9" width="3" height="1" fill="#000000"/><rect x="7" y="9" width="1" height="1" fill="#FFFFFF"/><rect x="8" y="9" width="2" height="1" fill="#000000"/><rect x="10" y="9" width="1" height="1" fill="#FFFFFF"/><rect x="11" y="9" width="5" height="1" fill="#000000"/><rect x="1" y="10" width="2" height="1" fill="#000000"/><rect x="3" y="10" width="1" height="1" fill="#FFFFFF"/><rect x="4" y="10" width="6" height="1" fill="#000000"/><rect x="10" y="10" width="1" height="1" fill="#FFFFFF"/><rect x="11" y="10" width="5" height="1" fill="#000000"/><rect x="1" y="11" width="15" height="1" fill="#000000"/><rect x="1" y="12" width="1" height="1" fill="#000000"/><rect x="2" y="12" width="1" height="1" fill="#FFFFFF"/><rect x="3" y="12" width="3" height="1" fill="#000000"/><rect x="11" y="12" width="1" height="1" fill="#000000"/><rect x="12" y="12" width="1" height="1" fill="#FFFFFF"/><rect x="13" y="12" width="3" height="1" fill="#000000"/><rect x="1" y="13" width="1" height="1" fill="#000000"/><rect x="2" y="13" width="1" height="1" fill="#FFFFFF"/><rect x="3" y="13" width="3" height="1" fill="#000000"/><rect x="11" y="13" width="1" height="1" fill="#000000"/><rect x="12" y="13" width="1" height="1" fill="#FFFFFF"/><rect x="13" y="13" width="3" height="1" fill="#000000"/><rect x="1" y="14" width="5" height="1" fill="#000000"/><rect x="11" y="14" width="5" height="1" fill="#000000"/></svg>
<svg class="a" style="left:298px;top:52px" width="16" height="17" shape-rendering="crispEdges"><rect x="6" y="1" width="5" height="1" fill="#ACA899"/><rect x="2" y="2" width="1" height="1" fill="#ACA899"/><rect x="5" y="2" width="1" height="1" fill="#ACA899"/><rect x="6" y="2" width="5" height="1" fill="#FFFFFF"/><rect x="11" y="2" width="1" height="1" fill="#ACA899"/><rect x="2" y="3" width="2" height="1" fill="#ACA899"/><rect x="5" y="3" width="1" height="1" fill="#ACA899"/><rect x="6" y="3" width="6" height="1" fill="#FFFFFF"/><rect x="12" y="3" width="1" height="1" fill="#ACA899"/><rect x="13" y="3" width="1" height="1" fill="#FFFFFF"/><rect x="2" y="4" width="4" height="1" fill="#ACA899"/><rect x="6" y="4" width="2" height="1" fill="#FFFFFF"/><rect x="8" y="4" width="3" height="1" fill="#ACA899"/><rect x="11" y="4" width="1" height="1" fill="#FFFFFF"/><rect x="12" y="4" width="1" height="1" fill="#ACA899"/><rect x="13" y="4" width="1" height="1" fill="#FFFFFF"/><rect x="2" y="5" width="4" height="1" fill="#ACA899"/><rect x="6" y="5" width="1" height="1" fill="#FFFFFF"/><rect x="11" y="5" width="2" height="1" fill="#ACA899"/><rect x="13" y="5" width="1" height="1" fill="#FFFFFF"/><rect x="2" y="6" width="4" height="1" fill="#FFFFFF"/><rect x="10" y="6" width="2" height="1" fill="#ACA899"/><rect x="12" y="6" width="1" height="1" fill="#FFFFFF"/><rect x="6" y="7" width="2" height="1" fill="#ACA899"/><rect x="11" y="7" width="2" height="1" fill="#ACA899"/><rect x="6" y="8" width="2" height="1" fill="#ACA899"/><rect x="8" y="8" width="1" height="1" fill="#FFFFFF"/><rect x="11" y="8" width="2" height="1" fill="#ACA899"/><rect x="13" y="8" width="1" height="1" fill="#FFFFFF"/><rect x="4" y="9" width="11" height="1" fill="#ACA899"/><rect x="4" y="10" width="1" height="1" fill="#ACA899"/><rect x="5" y="10" width="1" height="1" fill="#FFFFFF"/><rect x="6" y="10" width="6" height="1" fill="#ACA899"/><rect x="12" y="10" width="1" height="1" fill="#FFFFFF"/><rect x="13" y="10" width="2" height="1" fill="#ACA899"/><rect x="15" y="10" width="1" height="1" fill="#FFFFFF"/><rect x="4" y="11" width="1" height="1" fill="#ACA899"/><rect x="5" y="11" width="1" height="1" fill="#FFFFFF"/><rect x="6" y="11" width="6" height="1" fill="#ACA899"/><rect x="12" y="11" width="1" height="1" fill="#FFFFFF"/><rect x="13" y="11" width="2" height="1" fill="#ACA899"/><rect x="15" y="11" width="1" height="1" fill="#FFFFFF"/><rect x="4" y="12" width="11" height="1" fill="#ACA899"/><rect x="15" y="12" width="1" height="1" fill="#FFFFFF"/><rect x="4" y="13" width="1" height="1" fill="#ACA899"/><rect x="5" y="13" width="1" height="1" fill="#FFFFFF"/><rect x="6" y="13" width="2" height="1" fill="#ACA899"/><rect x="11" y="13" width="1" height="1" fill="#ACA899"/><rect x="12" y="13" width="1" height="1" fill="#FFFFFF"/><rect x="13" y="13" width="2" height="1" fill="#ACA899"/><rect x="15" y="13" width="1" height="1" fill="#FFFFFF"/><rect x="4" y="14" width="1" height="1" fill="#ACA899"/><rect x="5" y="14" width="1" height="1" fill="#FFFFFF"/><rect x="6" y="14" width="2" height="1" fill="#ACA899"/><rect x="8" y="14" width="1" height="1" fill="#FFFFFF"/><rect x="11" y="14" width="1" height="1" fill="#ACA899"/><rect x="12" y="14" width="1" height="1" fill="#FFFFFF"/><rect x="13" y="14" width="2" height="1" fill="#ACA899"/><rect x="15" y="14" width="1" height="1" fill="#FFFFFF"/><rect x="4" y="15" width="4" height="1" fill="#ACA899"/><rect x="8" y="15" width="1" height="1" fill="#FFFFFF"/><rect x="11" y="15" width="4" height="1" fill="#ACA899"/><rect x="15" y="15" width="1" height="1" fill="#FFFFFF"/><rect x="5" y="16" width="4" height="1" fill="#FFFFFF"/><rect x="12" y="16" width="4" height="1" fill="#FFFFFF"/></svg>
<svg class="a" style="left:321px;top:52px" width="16" height="17" shape-rendering="crispEdges"><rect x="5" y="1" width="5" height="1" fill="#ACA899"/><rect x="4" y="2" width="1" height="1" fill="#ACA899"/><rect x="5" y="2" width="5" height="1" fill="#FFFFFF"/><rect x="10" y="2" width="1" height="1" fill="#ACA899"/><rect x="13" y="2" width="1" height="1" fill="#ACA899"/><rect x="3" y="3" width="1" height="1" fill="#ACA899"/><rect x="4" y="3" width="6" height="1" fill="#FFFFFF"/><rect x="10" y="3" width="1" height="1" fill="#ACA899"/><rect x="12" y="3" width="2" height="1" fill="#ACA899"/><rect x="14" y="3" width="1" height="1" fill="#FFFFFF"/><rect x="3" y="4" width="1" height="1" fill="#ACA899"/><rect x="4" y="4" width="1" height="1" fill="#FFFFFF"/><rect x="5" y="4" width="3" height="1" fill="#ACA899"/><rect x="8" y="4" width="2" height="1" fill="#FFFFFF"/><rect x="10" y="4" width="4" height="1" fill="#ACA899"/><rect x="14" y="4" width="1" height="1" fill="#FFFFFF"/><rect x="3" y="5" width="2" height="1" fill="#ACA899"/><rect x="5" y="5" width="1" height="1" fill="#FFFFFF"/><rect x="10" y="5" width="4" height="1" fill="#ACA899"/><rect x="14" y="5" width="1" height="1" fill="#FFFFFF"/><rect x="4" y="6" width="2" height="1" fill="#ACA899"/><rect x="6" y="6" width="1" height="1" fill="#FFFFFF"/><rect x="10" y="6" width="5" height="1" fill="#FFFFFF"/><rect x="5" y="7" width="2" height="1" fill="#ACA899"/><rect x="10" y="7" width="2" height="1" fill="#ACA899"/><rect x="5" y="8" width="2" height="1" fill="#ACA899"/><rect x="7" y="8" width="1" height="1" fill="#FFFFFF"/><rect x="10" y="8" width="2" height="1" fill="#ACA899"/><rect x="12" y="8" width="1" height="1" fill="#FFFFFF"/><rect x="3" y="9" width="11" height="1" fill="#ACA899"/><rect x="3" y="10" width="1" height="1" fill="#ACA899"/><rect x="4" y="10" width="1" height="1" fill="#FFFFFF"/><rect x="5" y="10" width="6" height="1" fill="#ACA899"/><rect x="11" y="10" width="1" height="1" fill="#FFFFFF"/><rect x="12" y="10" width="2" height="1" fill="#ACA899"/><rect x="14" y="10" width="1" height="1" fill="#FFFFFF"/><rect x="3" y="11" width="1" height="1" fill="#ACA899"/><rect x="4" y="11" width="1" height="1" fill="#FFFFFF"/><rect x="5" y="11" width="6" height="1" fill="#ACA899"/><rect x="11" y="11" width="1" height="1" fill="#FFFFFF"/><rect x="12" y="11" width="2" height="1" fill="#ACA899"/><rect x="14" y="11" width="1" height="1" fill="#FFFFFF"/><rect x="3" y="12" width="11" height="1" fill="#ACA899"/><rect x="14" y="12" width="1" height="1" fill="#FFFFFF"/><rect x="3" y="13" width="1" height="1" fill="#ACA899"/><rect x="4" y="13" width="1" height="1" fill="#FFFFFF"/><rect x="5" y="13" width="2" height="1" fill="#ACA899"/><rect x="10" y="13" width="1" height="1" fill="#ACA899"/><rect x="11" y="13" width="1" height="1" fill="#FFFFFF"/><rect x="12" y="13" width="2" height="1" fill="#ACA899"/><rect x="14" y="13" width="1" height="1" fill="#FFFFFF"/><rect x="3" y="14" width="1" height="1" fill="#ACA899"/><rect x="4" y="14" width="1" height="1" fill="#FFFFFF"/><rect x="5" y="14" width="2" height="1" fill="#ACA899"/><rect x="7" y="14" width="1" height="1" fill="#FFFFFF"/><rect x="10" y="14" width="1" height="1" fill="#ACA899"/><rect x="11" y="14" width="1" height="1" fill="#FFFFFF"/><rect x="12" y="14" width="2" height="1" fill="#ACA899"/><rect x="14" y="14" width="1" height="1" fill="#FFFFFF"/><rect x="3" y="15" width="4" height="1" fill="#ACA899"/><rect x="7" y="15" width="1" height="1" fill="#FFFFFF"/><rect x="10" y="15" width="4" height="1" fill="#ACA899"/><rect x="14" y="15" width="1" height="1" fill="#FFFFFF"/><rect x="4" y="16" width="4" height="1" fill="#FFFFFF"/><rect x="11" y="16" width="4" height="1" fill="#FFFFFF"/></svg>
<svg class="a" style="left:352px;top:52px" width="16" height="16" shape-rendering="crispEdges"><rect x="1" y="1" width="4" height="1" fill="#000000"/><rect x="0" y="2" width="1" height="1" fill="#000000"/><rect x="1" y="2" width="4" height="1" fill="#FFFF00"/><rect x="5" y="2" width="6" height="1" fill="#000000"/><rect x="0" y="3" width="1" height="1" fill="#000000"/><rect x="1" y="3" width="1" height="1" fill="#FFFF00"/><rect x="2" y="3" width="1" height="1" fill="#FFFFFF"/><rect x="3" y="3" width="1" height="1" fill="#000080"/><rect x="4" y="3" width="1" height="1" fill="#FFFFFF"/><rect x="5" y="3" width="1" height="1" fill="#FFFF00"/><rect x="6" y="3" width="1" height="1" fill="#FFFFFF"/><rect x="7" y="3" width="1" height="1" fill="#FFFF00"/><rect x="8" y="3" width="1" height="1" fill="#FFFFFF"/><rect x="9" y="3" width="1" height="1" fill="#FFFF00"/><rect x="10" y="3" width="1" height="1" fill="#000000"/><rect x="0" y="4" width="1" height="1" fill="#000000"/><rect x="1" y="4" width="1" height="1" fill="#FFFFFF"/><rect x="2" y="4" width="1" height="1" fill="#FFFF00"/><rect x="3" y="4" width="1" height="1" fill="#FFFFFF"/><rect x="4" y="4" width="1" height="1" fill="#000080"/><rect x="5" y="4" width="1" height="1" fill="#FFFFFF"/><rect x="6" y="4" width="1" height="1" fill="#FFFF00"/><rect x="7" y="4" width="1" height="1" fill="#FFFFFF"/><rect x="8" y="4" width="1" height="1" fill="#FFFF00"/><rect x="9" y="4" width="1" height="1" fill="#FFFFFF"/><rect x="10" y="4" width="1" height="1" fill="#000000"/><rect x="0" y="5" width="1" height="1" fill="#000000"/><rect x="1" y="5" width="1" height="1" fill="#FFFF00"/><rect x="2" y="5" width="1" height="1" fill="#FFFFFF"/><rect x="3" y="5" width="1" height="1" fill="#FFFF00"/><rect x="4" y="5" width="1" height="1" fill="#FFFFFF"/><rect x="5" y="5" width="1" height="1" fill="#000080"/><rect x="6" y="5" width="1" height="1" fill="#FFFF00"/><rect x="7" y="5" width="1" height="1" fill="#FFFFFF"/><rect x="8" y="5" width="3" height="1" fill="#000000"/><rect x="12" y="5" width="2" height="1" fill="#000000"/><rect x="0" y="6" width="1" height="1" fill="#000000"/><rect x="1" y="6" width="1" height="1" fill="#FFFFFF"/><rect x="2" y="6" width="1" height="1" fill="#FFFF00"/><rect x="3" y="6" width="1" height="1" fill="#FFFFFF"/><rect x="4" y="6" width="1" height="1" fill="#FFFF00"/><rect x="5" y="6" width="1" height="1" fill="#FFFFFF"/><rect x="6" y="6" width="1" height="1" fill="#FFFF00"/><rect x="7" y="6" width="4" height="1" fill="#000000"/><rect x="12" y="6" width="2" height="1" fill="#000000"/><rect x="0" y="7" width="1" height="1" fill="#000000"/><rect x="1" y="7" width="1" height="1" fill="#FFFF00"/><rect x="2" y="7" width="1" height="1" fill="#000080"/><rect x="3" y="7" width="1" height="1" fill="#FFFF00"/><rect x="4" y="7" width="1" height="1" fill="#FFFFFF"/><rect x="5" y="7" width="1" height="1" fill="#FFFF00"/><rect x="6" y="7" width="1" height="1" fill="#FFFFFF"/><rect x="7" y="7" width="7" height="1" fill="#000000"/><rect x="0" y="8" width="1" height="1" fill="#000000"/><rect x="1" y="8" width="1" height="1" fill="#FFFFFF"/><rect x="2" y="8" width="1" height="1" fill="#FFFF00"/><rect x="3" y="8" width="1" height="1" fill="#000080"/><rect x="4" y="8" width="1" height="1" fill="#FFFF00"/><rect x="5" y="8" width="1" height="1" fill="#FFFFFF"/><rect x="6" y="8" width="1" height="1" fill="#FFFF00"/><rect x="7" y="8" width="3" height="1" fill="#000000"/><rect x="10" y="8" width="1" height="1" fill="#FFFFFF"/><rect x="11" y="8" width="4" height="1" fill="#000000"/><rect x="0" y="9" width="15" height="1" fill="#000000"/><rect x="5" y="10" width="1" height="1" fill="#000000"/><rect x="6" y="10" width="1" height="1" fill="#FFFFFF"/><rect x="7" y="10" width="4" height="1" fill="#000000"/><rect x="11" y="10" width="1" height="1" fill="#FFFFFF"/><rect x="12" y="10" width="3" height="1" fill="#000000"/><rect x="5" y="11" width="1" height="1" fill="#000000"/><rect x="6" y="11" width="1" height="1" fill="#FFFFFF"/><rect x="7" y="11" width="4" height="1" fill="#000000"/><rect x="11" y="11" width="1" height="1" fill="#FFFFFF"/><rect x="12" y="11" width="3" height="1" fill="#000000"/><rect x="5" y="12" width="4" height="1" fill="#000000"/><rect x="11" y="12" width="4" height="1" fill="#000000"/><rect x="5" y="13" width="1" height="1" fill="#000000"/><rect x="6" y="13" width="1" height="1" fill="#FFFFFF"/><rect x="7" y="13" width="2" height="1" fill="#000000"/><rect x="11" y="13" width="2" height="1" fill="#000000"/><rect x="13" y="13" width="1" height="1" fill="#FFFFFF"/><rect x="14" y="13" width="1" height="1" fill="#000000"/><rect x="5" y="14" width="4" height="1" fill="#000000"/><rect x="11" y="14" width="4" height="1" fill="#000000"/></svg>
<svg class="a" style="left:384px;top:52px" width="16" height="14" shape-rendering="crispEdges"><rect x="3" y="4" width="10" height="1" fill="#000080"/><rect x="3" y="7" width="10" height="1" fill="#000080"/><rect x="3" y="10" width="10" height="1" fill="#000080"/><rect x="3" y="13" width="10" height="1" fill="#000080"/></svg>
<svg class="a" style="left:406px;top:52px" width="16" height="14" shape-rendering="crispEdges"><rect x="3" y="3" width="10" height="1" fill="#000080"/><rect x="13" y="4" width="1" height="1" fill="#000080"/><rect x="8" y="5" width="5" height="1" fill="#000080"/><rect x="3" y="7" width="10" height="1" fill="#000080"/><rect x="13" y="8" width="1" height="1" fill="#000080"/><rect x="8" y="9" width="5" height="1" fill="#000080"/><rect x="3" y="11" width="10" height="1" fill="#000080"/><rect x="13" y="12" width="1" height="1" fill="#000080"/><rect x="8" y="13" width="5" height="1" fill="#000080"/></svg>
<svg class="a" style="left:429px;top:52px" width="16" height="15" shape-rendering="crispEdges"><rect x="1" y="3" width="14" height="1" fill="#000080"/><rect x="1" y="4" width="14" height="1" fill="#000080"/><rect x="1" y="5" width="1" height="1" fill="#000000"/><rect x="2" y="5" width="12" height="1" fill="#FFFFFF"/><rect x="14" y="5" width="1" height="1" fill="#000000"/><rect x="1" y="6" width="1" height="1" fill="#000000"/><rect x="2" y="6" width="1" height="1" fill="#FFFFFF"/><rect x="3" y="6" width="9" height="1" fill="#000080"/><rect x="12" y="6" width="2" height="1" fill="#FFFFFF"/><rect x="14" y="6" width="1" height="1" fill="#000000"/><rect x="1" y="7" width="1" height="1" fill="#000000"/><rect x="2" y="7" width="10" height="1" fill="#FFFFFF"/><rect x="12" y="7" width="1" height="1" fill="#000080"/><rect x="13" y="7" width="1" height="1" fill="#FFFFFF"/><rect x="14" y="7" width="1" height="1" fill="#000000"/><rect x="1" y="8" width="1" height="1" fill="#000000"/><rect x="2" y="8" width="6" height="1" fill="#FFFFFF"/><rect x="8" y="8" width="5" height="1" fill="#000080"/><rect x="13" y="8" width="1" height="1" fill="#FFFFFF"/><rect x="14" y="8" width="1" height="1" fill="#000000"/><rect x="1" y="9" width="1" height="1" fill="#000000"/><rect x="2" y="9" width="12" height="1" fill="#FFFFFF"/><rect x="14" y="9" width="1" height="1" fill="#000000"/><rect x="1" y="10" width="1" height="1" fill="#000000"/><rect x="2" y="10" width="1" height="1" fill="#FFFFFF"/><rect x="3" y="10" width="9" height="1" fill="#000080"/><rect x="12" y="10" width="2" height="1" fill="#FFFFFF"/><rect x="14" y="10" width="1" height="1" fill="#000000"/><rect x="1" y="11" width="1" height="1" fill="#000000"/><rect x="2" y="11" width="10" height="1" fill="#FFFFFF"/><rect x="12" y="11" width="1" height="1" fill="#000080"/><rect x="13" y="11" width="1" height="1" fill="#FFFFFF"/><rect x="14" y="11" width="1" height="1" fill="#000000"/><rect x="1" y="12" width="1" height="1" fill="#000000"/><rect x="2" y="12" width="6" height="1" fill="#FFFFFF"/><rect x="8" y="12" width="5" height="1" fill="#000080"/><rect x="13" y="12" width="1" height="1" fill="#FFFFFF"/><rect x="14" y="12" width="1" height="1" fill="#000000"/><rect x="1" y="13" width="1" height="1" fill="#000000"/><rect x="2" y="13" width="12" height="1" fill="#FFFFFF"/><rect x="14" y="13" width="1" height="1" fill="#000000"/><rect x="1" y="14" width="14" height="1" fill="#000000"/></svg>
<svg class="a" style="left:488px;top:52px" width="16" height="15" shape-rendering="crispEdges"><rect x="5" y="1" width="9" height="1" fill="#000000"/><rect x="5" y="2" width="1" height="1" fill="#000000"/><rect x="6" y="2" width="7" height="1" fill="#FFFFFF"/><rect x="13" y="2" width="2" height="1" fill="#000000"/><rect x="0" y="3" width="13" height="1" fill="#000000"/><rect x="13" y="3" width="2" height="1" fill="#FFFFFF"/><rect x="15" y="3" width="1" height="1" fill="#000000"/><rect x="0" y="4" width="1" height="1" fill="#000000"/><rect x="1" y="4" width="12" height="1" fill="#00FF00"/><rect x="13" y="4" width="1" height="1" fill="#000000"/><rect x="14" y="4" width="1" height="1" fill="#FFFFFF"/><rect x="15" y="4" width="1" height="1" fill="#000000"/><rect x="0" y="5" width="1" height="1" fill="#000000"/><rect x="1" y="5" width="1" height="1" fill="#00FF00"/><rect x="2" y="5" width="2" height="1" fill="#000000"/><rect x="4" y="5" width="2" height="1" fill="#00FF00"/><rect x="6" y="5" width="1" height="1" fill="#000000"/><rect x="7" y="5" width="1" height="1" fill="#00FF00"/><rect x="8" y="5" width="1" height="1" fill="#000000"/><rect x="9" y="5" width="1" height="1" fill="#00FF00"/><rect x="10" y="5" width="1" height="1" fill="#000000"/><rect x="11" y="5" width="2" height="1" fill="#00FF00"/><rect x="13" y="5" width="1" height="1" fill="#000000"/><rect x="14" y="5" width="1" height="1" fill="#FFFFFF"/><rect x="15" y="5" width="1" height="1" fill="#000000"/><rect x="0" y="6" width="1" height="1" fill="#000000"/><rect x="1" y="6" width="1" height="1" fill="#00FF00"/><rect x="2" y="6" width="1" height="1" fill="#000000"/><rect x="3" y="6" width="1" height="1" fill="#00FF00"/><rect x="4" y="6" width="1" height="1" fill="#000000"/><rect x="5" y="6" width="1" height="1" fill="#00FF00"/><rect x="6" y="6" width="1" height="1" fill="#000000"/><rect x="7" y="6" width="1" height="1" fill="#00FF00"/><rect x="8" y="6" width="1" height="1" fill="#000000"/><rect x="9" y="6" width="1" height="1" fill="#00FF00"/><rect x="10" y="6" width="1" height="1" fill="#000000"/><rect x="11" y="6" width="2" height="1" fill="#00FF00"/><rect x="13" y="6" width="1" height="1" fill="#000000"/><rect x="14" y="6" width="1" height="1" fill="#FFFFFF"/><rect x="15" y="6" width="1" height="1" fill="#000000"/><rect x="0" y="7" width="1" height="1" fill="#000000"/><rect x="1" y="7" width="1" height="1" fill="#00FF00"/><rect x="2" y="7" width="1" height="1" fill="#000000"/><rect x="3" y="7" width="1" height="1" fill="#00FF00"/><rect x="4" y="7" width="1" height="1" fill="#000000"/><rect x="5" y="7" width="1" height="1" fill="#00FF00"/><rect x="6" y="7" width="1" height="1" fill="#000000"/><rect x="7" y="7" width="1" height="1" fill="#00FF00"/><rect x="8" y="7" width="1" height="1" fill="#000000"/><rect x="9" y="7" width="1" height="1" fill="#00FF00"/><rect x="10" y="7" width="1" height="1" fill="#000000"/><rect x="11" y="7" width="2" height="1" fill="#00FF00"/><rect x="13" y="7" width="1" height="1" fill="#000000"/><rect x="14" y="7" width="1" height="1" fill="#FFFFFF"/><rect x="15" y="7" width="1" height="1" fill="#000000"/><rect x="0" y="8" width="1" height="1" fill="#000000"/><rect x="1" y="8" width="1" height="1" fill="#00FF00"/><rect x="2" y="8" width="1" height="1" fill="#000000"/><rect x="3" y="8" width="1" height="1" fill="#00FF00"/><rect x="4" y="8" width="1" height="1" fill="#000000"/><rect x="5" y="8" width="1" height="1" fill="#00FF00"/><rect x="6" y="8" width="1" height="1" fill="#000000"/><rect x="7" y="8" width="1" height="1" fill="#00FF00"/><rect x="8" y="8" width="1" height="1" fill="#000000"/><rect x="9" y="8" width="1" height="1" fill="#00FF00"/><rect x="10" y="8" width="1" height="1" fill="#000000"/><rect x="11" y="8" width="2" height="1" fill="#00FF00"/><rect x="13" y="8" width="1" height="1" fill="#000000"/><rect x="14" y="8" width="1" height="1" fill="#FFFFFF"/><rect x="15" y="8" width="1" height="1" fill="#000000"/><rect x="0" y="9" width="1" height="1" fill="#000000"/><rect x="1" y="9" width="1" height="1" fill="#00FF00"/><rect x="2" y="9" width="2" height="1" fill="#000000"/><rect x="4" y="9" width="3" height="1" fill="#00FF00"/><rect x="7" y="9" width="1" height="1" fill="#000000"/><rect x="8" y="9" width="2" height="1" fill="#00FF00"/><rect x="10" y="9" width="1" height="1" fill="#000000"/><rect x="11" y="9" width="2" height="1" fill="#00FF00"/><rect x="13" y="9" width="1" height="1" fill="#000000"/><rect x="14" y="9" width="1" height="1" fill="#FFFFFF"/><rect x="15" y="9" width="1" height="1" fill="#000000"/><rect x="0" y="10" width="1" height="1" fill="#000000"/><rect x="1" y="10" width="12" height="1" fill="#00FF00"/><rect x="13" y="10" width="1" height="1" fill="#000000"/><rect x="14" y="10" width="1" height="1" fill="#FFFFFF"/><rect x="15" y="10" width="1" height="1" fill="#000000"/><rect x="0" y="11" width="14" height="1" fill="#000000"/><rect x="14" y="11" width="1" height="1" fill="#FFFFFF"/><rect x="15" y="11" width="1" height="1" fill="#000000"/><rect x="5" y="12" width="1" height="1" fill="#000000"/><rect x="6" y="12" width="9" height="1" fill="#FFFFFF"/><rect x="15" y="12" width="1" height="1" fill="#000000"/><rect x="5" y="13" width="1" height="1" fill="#000000"/><rect x="6" y="13" width="9" height="1" fill="#FFFFFF"/><rect x="15" y="13" width="1" height="1" fill="#000000"/><rect x="5" y="14" width="11" height="1" fill="#000000"/></svg>
<svg class="a" style="left:464px;top:52px" width="16" height="14" shape-rendering="crispEdges"><rect x="1" y="2" width="11" height="1" fill="#000000"/><rect x="13" y="2" width="3" height="1" fill="#000000"/><rect x="1" y="3" width="1" height="1" fill="#000000"/><rect x="2" y="3" width="6" height="1" fill="#FFFF00"/><rect x="8" y="3" width="2" height="1" fill="#000000"/><rect x="10" y="3" width="1" height="1" fill="#FFFF00"/><rect x="11" y="3" width="3" height="1" fill="#000000"/><rect x="14" y="3" width="1" height="1" fill="#FFFF00"/><rect x="15" y="3" width="1" height="1" fill="#000000"/><rect x="1" y="4" width="3" height="1" fill="#000000"/><rect x="4" y="4" width="2" height="1" fill="#FFFF00"/><rect x="6" y="4" width="5" height="1" fill="#000000"/><rect x="11" y="4" width="1" height="1" fill="#FFFF00"/><rect x="12" y="4" width="1" height="1" fill="#000000"/><rect x="13" y="4" width="1" height="1" fill="#FFFF00"/><rect x="14" y="4" width="2" height="1" fill="#000000"/><rect x="3" y="5" width="1" height="1" fill="#000000"/><rect x="4" y="5" width="2" height="1" fill="#FFFF00"/><rect x="6" y="5" width="1" height="1" fill="#000000"/><rect x="10" y="5" width="2" height="1" fill="#000000"/><rect x="12" y="5" width="1" height="1" fill="#FFFF00"/><rect x="13" y="5" width="2" height="1" fill="#000000"/><rect x="3" y="6" width="1" height="1" fill="#000000"/><rect x="4" y="6" width="2" height="1" fill="#FFFF00"/><rect x="6" y="6" width="1" height="1" fill="#000000"/><rect x="9" y="6" width="2" height="1" fill="#000000"/><rect x="11" y="6" width="1" height="1" fill="#FFFF00"/><rect x="12" y="6" width="1" height="1" fill="#000000"/><rect x="13" y="6" width="1" height="1" fill="#FFFF00"/><rect x="14" y="6" width="2" height="1" fill="#000000"/><rect x="3" y="7" width="1" height="1" fill="#000000"/><rect x="4" y="7" width="2" height="1" fill="#FFFF00"/><rect x="6" y="7" width="4" height="1" fill="#000000"/><rect x="10" y="7" width="1" height="1" fill="#FFFF00"/><rect x="11" y="7" width="3" height="1" fill="#000000"/><rect x="14" y="7" width="1" height="1" fill="#FFFF00"/><rect x="15" y="7" width="1" height="1" fill="#000000"/><rect x="3" y="8" width="1" height="1" fill="#000000"/><rect x="4" y="8" width="6" height="1" fill="#FFFF00"/><rect x="10" y="8" width="2" height="1" fill="#000000"/><rect x="13" y="8" width="3" height="1" fill="#000000"/><rect x="3" y="9" width="2" height="1" fill="#000000"/><rect x="5" y="9" width="1" height="1" fill="#FFFF00"/><rect x="6" y="9" width="5" height="1" fill="#000000"/><rect x="4" y="10" width="1" height="1" fill="#000000"/><rect x="5" y="10" width="4" height="1" fill="#FFFF00"/><rect x="9" y="10" width="1" height="1" fill="#000000"/><rect x="4" y="11" width="1" height="1" fill="#000000"/><rect x="5" y="11" width="1" height="1" fill="#FFFF00"/><rect x="6" y="11" width="6" height="1" fill="#000000"/><rect x="4" y="12" width="1" height="1" fill="#000000"/><rect x="5" y="12" width="6" height="1" fill="#FFFF00"/><rect x="11" y="12" width="1" height="1" fill="#000000"/><rect x="4" y="13" width="8" height="1" fill="#000000"/></svg>
<div class="a" style="left:523px;top:52px;width:61px;height:20px;border-left:1px solid #fff;border-top:1px solid #fff;border-right:1px solid #ACA899;background:#ECE9D8"></div>
<div class="a ui tabt" id="tb1" style="transform:scaleX(0.9880);left:529px;top:56px"><span class=st>*</span>scratch<span class=st>*</span></div>
<div class="a" style="left:636px;top:52px;width:119px;height:20px;border-left:1px solid #fff;border-top:1px solid #fff;border-right:1px solid #ACA899;background:#ECE9D8"></div>
<div class="a ui tabt" id="tb3" style="transform:scaleX(0.9613);left:641px;top:56px"><span class=st>*</span>KaTeX−typesetting<span class=st>*</span></div>
<div class="a" style="left:584px;top:50px;width:52px;height:22px;border-left:1px solid #fff;border-top:1px solid #fff;border-right:1px solid #ACA899;background:#ECE9D8"></div>
<div class="a ui tabt" id="tb2" style="transform:scaleX(0.9564);left:590px;top:54px">test.tex</div>
<div class="a" style="left:0px;top:74px;width:1px;height:12px;background:#fff;"></div>
<div class="a" style="left:62px;top:74px;width:1198px;height:12px;background:#fff;"></div>
<div class="a" style="left:62px;top:75px;width:8px;height:10px;border:1px solid #000;background:#ECE9D8;border-top-color:#000"></div>
<div class="a" style="left:63px;top:76px;width:6px;height:1px;background:#fff;"></div>
<div class="a" style="left:63px;top:76px;width:1px;height:8px;background:#fff;"></div>
<div class="a" style="left:74px;top:79px;width:1px;height:2px;background:#000;"></div>
<div class="a" style="left:82px;top:79px;width:1px;height:2px;background:#000;"></div>
<div class="a" style="left:90px;top:79px;width:1px;height:2px;background:#000;"></div>
<div class="a" style="left:98px;top:78px;width:1px;height:4px;background:#000;"></div>
<div class="a" style="left:106px;top:79px;width:1px;height:2px;background:#000;"></div>
<div class="a" style="left:114px;top:79px;width:1px;height:2px;background:#000;"></div>
<div class="a" style="left:122px;top:79px;width:1px;height:2px;background:#000;"></div>
<div class="a" style="left:130px;top:79px;width:1px;height:2px;background:#000;"></div>
<div class="a rl" style="left:123px;top:76px;width:30px;text-align:center;transform:scaleX(0.8)">10</div>
<div class="a" style="left:146px;top:79px;width:1px;height:2px;background:#000;"></div>
<div class="a" style="left:154px;top:79px;width:1px;height:2px;background:#000;"></div>
<div class="a" style="left:162px;top:79px;width:1px;height:2px;background:#000;"></div>
<div class="a" style="left:170px;top:79px;width:1px;height:2px;background:#000;"></div>
<div class="a" style="left:178px;top:78px;width:1px;height:4px;background:#000;"></div>
<div class="a" style="left:186px;top:79px;width:1px;height:2px;background:#000;"></div>
<div class="a" style="left:194px;top:79px;width:1px;height:2px;background:#000;"></div>
<div class="a" style="left:202px;top:79px;width:1px;height:2px;background:#000;"></div>
<div class="a" style="left:210px;top:79px;width:1px;height:2px;background:#000;"></div>
<div class="a rl" style="left:203px;top:76px;width:30px;text-align:center;transform:scaleX(0.8)">20</div>
<div class="a" style="left:226px;top:79px;width:1px;height:2px;background:#000;"></div>
<div class="a" style="left:234px;top:79px;width:1px;height:2px;background:#000;"></div>
<div class="a" style="left:242px;top:79px;width:1px;height:2px;background:#000;"></div>
<div class="a" style="left:250px;top:79px;width:1px;height:2px;background:#000;"></div>
<div class="a" style="left:258px;top:78px;width:1px;height:4px;background:#000;"></div>
<div class="a" style="left:266px;top:79px;width:1px;height:2px;background:#000;"></div>
<div class="a" style="left:274px;top:79px;width:1px;height:2px;background:#000;"></div>
<div class="a" style="left:282px;top:79px;width:1px;height:2px;background:#000;"></div>
<div class="a" style="left:290px;top:79px;width:1px;height:2px;background:#000;"></div>
<div class="a rl" style="left:283px;top:76px;width:30px;text-align:center;transform:scaleX(0.8)">30</div>
<div class="a" style="left:306px;top:79px;width:1px;height:2px;background:#000;"></div>
<div class="a" style="left:314px;top:79px;width:1px;height:2px;background:#000;"></div>
<div class="a" style="left:322px;top:79px;width:1px;height:2px;background:#000;"></div>
<div class="a" style="left:330px;top:79px;width:1px;height:2px;background:#000;"></div>
<div class="a" style="left:338px;top:78px;width:1px;height:4px;background:#000;"></div>
<div class="a" style="left:346px;top:79px;width:1px;height:2px;background:#000;"></div>
<div class="a" style="left:354px;top:79px;width:1px;height:2px;background:#000;"></div>
<div class="a" style="left:362px;top:79px;width:1px;height:2px;background:#000;"></div>
<div class="a" style="left:370px;top:79px;width:1px;height:2px;background:#000;"></div>
<div class="a rl" style="left:363px;top:76px;width:30px;text-align:center;transform:scaleX(0.8)">40</div>
<div class="a" style="left:386px;top:79px;width:1px;height:2px;background:#000;"></div>
<div class="a" style="left:394px;top:79px;width:1px;height:2px;background:#000;"></div>
<div class="a" style="left:402px;top:79px;width:1px;height:2px;background:#000;"></div>
<div class="a" style="left:410px;top:79px;width:1px;height:2px;background:#000;"></div>
<div class="a" style="left:418px;top:78px;width:1px;height:4px;background:#000;"></div>
<div class="a" style="left:426px;top:79px;width:1px;height:2px;background:#000;"></div>
<div class="a" style="left:434px;top:79px;width:1px;height:2px;background:#000;"></div>
<div class="a" style="left:442px;top:79px;width:1px;height:2px;background:#000;"></div>
<div class="a" style="left:450px;top:79px;width:1px;height:2px;background:#000;"></div>
<div class="a rl" style="left:443px;top:76px;width:30px;text-align:center;transform:scaleX(0.8)">50</div>
<div class="a" style="left:466px;top:79px;width:1px;height:2px;background:#000;"></div>
<div class="a" style="left:474px;top:79px;width:1px;height:2px;background:#000;"></div>
<div class="a" style="left:482px;top:79px;width:1px;height:2px;background:#000;"></div>
<div class="a" style="left:490px;top:79px;width:1px;height:2px;background:#000;"></div>
<div class="a" style="left:498px;top:78px;width:1px;height:4px;background:#000;"></div>
<div class="a" style="left:506px;top:79px;width:1px;height:2px;background:#000;"></div>
<div class="a" style="left:514px;top:79px;width:1px;height:2px;background:#000;"></div>
<div class="a" style="left:522px;top:79px;width:1px;height:2px;background:#000;"></div>
<div class="a" style="left:530px;top:79px;width:1px;height:2px;background:#000;"></div>
<div class="a rl" style="left:523px;top:76px;width:30px;text-align:center;transform:scaleX(0.8)">60</div>
<div class="a" style="left:546px;top:79px;width:1px;height:2px;background:#000;"></div>
<div class="a" style="left:554px;top:79px;width:1px;height:2px;background:#000;"></div>
<div class="a" style="left:562px;top:79px;width:1px;height:2px;background:#000;"></div>
<div class="a" style="left:570px;top:79px;width:1px;height:2px;background:#000;"></div>
<div class="a" style="left:578px;top:78px;width:1px;height:4px;background:#000;"></div>
<div class="a" style="left:586px;top:79px;width:1px;height:2px;background:#000;"></div>
<div class="a" style="left:594px;top:79px;width:1px;height:2px;background:#000;"></div>
<div class="a" style="left:602px;top:79px;width:1px;height:2px;background:#000;"></div>
<div class="a" style="left:610px;top:79px;width:1px;height:2px;background:#000;"></div>
<div class="a rl" style="left:603px;top:76px;width:30px;text-align:center;transform:scaleX(0.8)">70</div>
<div class="a" style="left:626px;top:79px;width:1px;height:2px;background:#000;"></div>
<div class="a" style="left:634px;top:79px;width:1px;height:2px;background:#000;"></div>
<div class="a" style="left:642px;top:79px;width:1px;height:2px;background:#000;"></div>
<div class="a" style="left:650px;top:79px;width:1px;height:2px;background:#000;"></div>
<div class="a" style="left:658px;top:78px;width:1px;height:4px;background:#000;"></div>
<div class="a" style="left:666px;top:79px;width:1px;height:2px;background:#000;"></div>
<div class="a" style="left:674px;top:79px;width:1px;height:2px;background:#000;"></div>
<div class="a" style="left:682px;top:79px;width:1px;height:2px;background:#000;"></div>
<div class="a" style="left:690px;top:79px;width:1px;height:2px;background:#000;"></div>
<div class="a rl" style="left:683px;top:76px;width:30px;text-align:center;transform:scaleX(0.8)">80</div>
<div class="a" style="left:706px;top:79px;width:1px;height:2px;background:#000;"></div>
<div class="a" style="left:714px;top:79px;width:1px;height:2px;background:#000;"></div>
<div class="a" style="left:722px;top:79px;width:1px;height:2px;background:#000;"></div>
<div class="a" style="left:730px;top:79px;width:1px;height:2px;background:#000;"></div>
<div class="a" style="left:738px;top:78px;width:1px;height:4px;background:#000;"></div>
<div class="a" style="left:746px;top:79px;width:1px;height:2px;background:#000;"></div>
<div class="a" style="left:754px;top:79px;width:1px;height:2px;background:#000;"></div>
<div class="a" style="left:762px;top:79px;width:1px;height:2px;background:#000;"></div>
<div class="a" style="left:770px;top:79px;width:1px;height:2px;background:#000;"></div>
<div class="a rl" style="left:763px;top:76px;width:30px;text-align:center;transform:scaleX(0.8)">90</div>
<div class="a" style="left:786px;top:79px;width:1px;height:2px;background:#000;"></div>
<div class="a" style="left:794px;top:79px;width:1px;height:2px;background:#000;"></div>
<div class="a" style="left:802px;top:79px;width:1px;height:2px;background:#000;"></div>
<div class="a" style="left:810px;top:79px;width:1px;height:2px;background:#000;"></div>
<div class="a" style="left:818px;top:78px;width:1px;height:4px;background:#000;"></div>
<div class="a" style="left:826px;top:79px;width:1px;height:2px;background:#000;"></div>
<div class="a" style="left:834px;top:79px;width:1px;height:2px;background:#000;"></div>
<div class="a" style="left:842px;top:79px;width:1px;height:2px;background:#000;"></div>
<div class="a" style="left:850px;top:79px;width:1px;height:2px;background:#000;"></div>
<div class="a rl" style="left:843px;top:76px;width:30px;text-align:center;transform:scaleX(0.8)">100</div>
<div class="a" style="left:866px;top:79px;width:1px;height:2px;background:#000;"></div>
<div class="a" style="left:874px;top:79px;width:1px;height:2px;background:#000;"></div>
<div class="a" style="left:882px;top:79px;width:1px;height:2px;background:#000;"></div>
<div class="a" style="left:890px;top:79px;width:1px;height:2px;background:#000;"></div>
<div class="a" style="left:898px;top:78px;width:1px;height:4px;background:#000;"></div>
<div class="a" style="left:906px;top:79px;width:1px;height:2px;background:#000;"></div>
<div class="a" style="left:914px;top:79px;width:1px;height:2px;background:#000;"></div>
<div class="a" style="left:922px;top:79px;width:1px;height:2px;background:#000;"></div>
<div class="a" style="left:930px;top:79px;width:1px;height:2px;background:#000;"></div>
<div class="a rl" style="left:923px;top:76px;width:30px;text-align:center;transform:scaleX(0.8)">110</div>
<div class="a" style="left:946px;top:79px;width:1px;height:2px;background:#000;"></div>
<div class="a" style="left:954px;top:79px;width:1px;height:2px;background:#000;"></div>
<div class="a" style="left:962px;top:79px;width:1px;height:2px;background:#000;"></div>
<div class="a" style="left:970px;top:79px;width:1px;height:2px;background:#000;"></div>
<div class="a" style="left:978px;top:78px;width:1px;height:4px;background:#000;"></div>
<div class="a" style="left:986px;top:79px;width:1px;height:2px;background:#000;"></div>
<div class="a" style="left:994px;top:79px;width:1px;height:2px;background:#000;"></div>
<div class="a" style="left:1002px;top:79px;width:1px;height:2px;background:#000;"></div>
<div class="a" style="left:1010px;top:79px;width:1px;height:2px;background:#000;"></div>
<div class="a rl" style="left:1003px;top:76px;width:30px;text-align:center;transform:scaleX(0.8)">120</div>
<div class="a" style="left:1026px;top:79px;width:1px;height:2px;background:#000;"></div>
<div class="a" style="left:1034px;top:79px;width:1px;height:2px;background:#000;"></div>
<div class="a" style="left:1042px;top:79px;width:1px;height:2px;background:#000;"></div>
<div class="a" style="left:1050px;top:79px;width:1px;height:2px;background:#000;"></div>
<div class="a" style="left:1058px;top:78px;width:1px;height:4px;background:#000;"></div>
<div class="a" style="left:1066px;top:79px;width:1px;height:2px;background:#000;"></div>
<div class="a" style="left:1074px;top:79px;width:1px;height:2px;background:#000;"></div>
<div class="a" style="left:1082px;top:79px;width:1px;height:2px;background:#000;"></div>
<div class="a" style="left:1090px;top:79px;width:1px;height:2px;background:#000;"></div>
<div class="a rl" style="left:1083px;top:76px;width:30px;text-align:center;transform:scaleX(0.8)">130</div>
<div class="a" style="left:1106px;top:79px;width:1px;height:2px;background:#000;"></div>
<div class="a" style="left:1114px;top:79px;width:1px;height:2px;background:#000;"></div>
<div class="a" style="left:1122px;top:79px;width:1px;height:2px;background:#000;"></div>
<div class="a" style="left:1130px;top:79px;width:1px;height:2px;background:#000;"></div>
<div class="a" style="left:1138px;top:78px;width:1px;height:4px;background:#000;"></div>
<div class="a" style="left:1146px;top:79px;width:1px;height:2px;background:#000;"></div>
<div class="a" style="left:1154px;top:79px;width:1px;height:2px;background:#000;"></div>
<div class="a" style="left:1162px;top:79px;width:1px;height:2px;background:#000;"></div>
<div class="a" style="left:1170px;top:79px;width:1px;height:2px;background:#000;"></div>
<div class="a rl" style="left:1163px;top:76px;width:30px;text-align:center;transform:scaleX(0.8)">140</div>
<div class="a" style="left:1186px;top:79px;width:1px;height:2px;background:#000;"></div>
<div class="a" style="left:1194px;top:79px;width:1px;height:2px;background:#000;"></div>
<div class="a" style="left:1202px;top:79px;width:1px;height:2px;background:#000;"></div>
<div class="a" style="left:1210px;top:79px;width:1px;height:2px;background:#000;"></div>
<div class="a" style="left:1218px;top:78px;width:1px;height:4px;background:#000;"></div>
<div class="a" style="left:1226px;top:79px;width:1px;height:2px;background:#000;"></div>
<div class="a" style="left:1234px;top:79px;width:1px;height:2px;background:#000;"></div>
<div class="a" style="left:1242px;top:79px;width:1px;height:2px;background:#000;"></div>
<div class="a" style="left:1250px;top:79px;width:1px;height:2px;background:#000;"></div>
<div class="a rl" style="left:1243px;top:76px;width:30px;text-align:center;transform:scaleX(0.8)">150</div>
<div class="a" style="left:1260px;top:74px;width:19px;height:12px;background:#ECE9D8;"></div>
<div class="a" style="left:1279px;top:74px;width:1px;height:12px;background:#ACA899;"></div>
<div class="a" style="left:0px;top:438px;width:1px;height:12px;background:#fff;"></div>
<div class="a" style="left:62px;top:438px;width:1198px;height:12px;background:#fff;"></div>
<div class="a" style="left:66px;top:443px;width:1px;height:2px;background:#000;"></div>
<div class="a" style="left:74px;top:443px;width:1px;height:2px;background:#000;"></div>
<div class="a" style="left:78px;top:439px;width:8px;height:10px;border:1px solid #000;background:#ECE9D8;border-top-color:#000"></div>
<div class="a" style="left:79px;top:440px;width:6px;height:1px;background:#fff;"></div>
<div class="a" style="left:79px;top:440px;width:1px;height:8px;background:#fff;"></div>
<div class="a" style="left:90px;top:443px;width:1px;height:2px;background:#000;"></div>
<div class="a" style="left:98px;top:442px;width:1px;height:4px;background:#000;"></div>
<div class="a" style="left:106px;top:443px;width:1px;height:2px;background:#000;"></div>
<div class="a" style="left:114px;top:443px;width:1px;height:2px;background:#000;"></div>
<div class="a" style="left:122px;top:443px;width:1px;height:2px;background:#000;"></div>
<div class="a" style="left:130px;top:443px;width:1px;height:2px;background:#000;"></div>
<div class="a rl" style="left:123px;top:440px;width:30px;text-align:center;transform:scaleX(0.8)">10</div>
<div class="a" style="left:146px;top:443px;width:1px;height:2px;background:#000;"></div>
<div class="a" style="left:154px;top:443px;width:1px;height:2px;background:#000;"></div>
<div class="a" style="left:162px;top:443px;width:1px;height:2px;background:#000;"></div>
<div class="a" style="left:170px;top:443px;width:1px;height:2px;background:#000;"></div>
<div class="a" style="left:178px;top:442px;width:1px;height:4px;background:#000;"></div>
<div class="a" style="left:186px;top:443px;width:1px;height:2px;background:#000;"></div>
<div class="a" style="left:194px;top:443px;width:1px;height:2px;background:#000;"></div>
<div class="a" style="left:202px;top:443px;width:1px;height:2px;background:#000;"></div>
<div class="a" style="left:210px;top:443px;width:1px;height:2px;background:#000;"></div>
<div class="a rl" style="left:203px;top:440px;width:30px;text-align:center;transform:scaleX(0.8)">20</div>
<div class="a" style="left:226px;top:443px;width:1px;height:2px;background:#000;"></div>
<div class="a" style="left:234px;top:443px;width:1px;height:2px;background:#000;"></div>
<div class="a" style="left:242px;top:443px;width:1px;height:2px;background:#000;"></div>
<div class="a" style="left:250px;top:443px;width:1px;height:2px;background:#000;"></div>
<div class="a" style="left:258px;top:442px;width:1px;height:4px;background:#000;"></div>
<div class="a" style="left:266px;top:443px;width:1px;height:2px;background:#000;"></div>
<div class="a" style="left:274px;top:443px;width:1px;height:2px;background:#000;"></div>
<div class="a" style="left:282px;top:443px;width:1px;height:2px;background:#000;"></div>
<div class="a" style="left:290px;top:443px;width:1px;height:2px;background:#000;"></div>
<div class="a rl" style="left:283px;top:440px;width:30px;text-align:center;transform:scaleX(0.8)">30</div>
<div class="a" style="left:306px;top:443px;width:1px;height:2px;background:#000;"></div>
<div class="a" style="left:314px;top:443px;width:1px;height:2px;background:#000;"></div>
<div class="a" style="left:322px;top:443px;width:1px;height:2px;background:#000;"></div>
<div class="a" style="left:330px;top:443px;width:1px;height:2px;background:#000;"></div>
<div class="a" style="left:338px;top:442px;width:1px;height:4px;background:#000;"></div>
<div class="a" style="left:346px;top:443px;width:1px;height:2px;background:#000;"></div>
<div class="a" style="left:354px;top:443px;width:1px;height:2px;background:#000;"></div>
<div class="a" style="left:362px;top:443px;width:1px;height:2px;background:#000;"></div>
<div class="a" style="left:370px;top:443px;width:1px;height:2px;background:#000;"></div>
<div class="a rl" style="left:363px;top:440px;width:30px;text-align:center;transform:scaleX(0.8)">40</div>
<div class="a" style="left:386px;top:443px;width:1px;height:2px;background:#000;"></div>
<div class="a" style="left:394px;top:443px;width:1px;height:2px;background:#000;"></div>
<div class="a" style="left:402px;top:443px;width:1px;height:2px;background:#000;"></div>
<div class="a" style="left:410px;top:443px;width:1px;height:2px;background:#000;"></div>
<div class="a" style="left:418px;top:442px;width:1px;height:4px;background:#000;"></div>
<div class="a" style="left:426px;top:443px;width:1px;height:2px;background:#000;"></div>
<div class="a" style="left:434px;top:443px;width:1px;height:2px;background:#000;"></div>
<div class="a" style="left:442px;top:443px;width:1px;height:2px;background:#000;"></div>
<div class="a" style="left:450px;top:443px;width:1px;height:2px;background:#000;"></div>
<div class="a rl" style="left:443px;top:440px;width:30px;text-align:center;transform:scaleX(0.8)">50</div>
<div class="a" style="left:466px;top:443px;width:1px;height:2px;background:#000;"></div>
<div class="a" style="left:474px;top:443px;width:1px;height:2px;background:#000;"></div>
<div class="a" style="left:482px;top:443px;width:1px;height:2px;background:#000;"></div>
<div class="a" style="left:490px;top:443px;width:1px;height:2px;background:#000;"></div>
<div class="a" style="left:498px;top:442px;width:1px;height:4px;background:#000;"></div>
<div class="a" style="left:506px;top:443px;width:1px;height:2px;background:#000;"></div>
<div class="a" style="left:514px;top:443px;width:1px;height:2px;background:#000;"></div>
<div class="a" style="left:522px;top:443px;width:1px;height:2px;background:#000;"></div>
<div class="a" style="left:530px;top:443px;width:1px;height:2px;background:#000;"></div>
<div class="a rl" style="left:523px;top:440px;width:30px;text-align:center;transform:scaleX(0.8)">60</div>
<div class="a" style="left:546px;top:443px;width:1px;height:2px;background:#000;"></div>
<div class="a" style="left:554px;top:443px;width:1px;height:2px;background:#000;"></div>
<div class="a" style="left:562px;top:443px;width:1px;height:2px;background:#000;"></div>
<div class="a" style="left:570px;top:443px;width:1px;height:2px;background:#000;"></div>
<div class="a" style="left:578px;top:442px;width:1px;height:4px;background:#000;"></div>
<div class="a" style="left:586px;top:443px;width:1px;height:2px;background:#000;"></div>
<div class="a" style="left:594px;top:443px;width:1px;height:2px;background:#000;"></div>
<div class="a" style="left:602px;top:443px;width:1px;height:2px;background:#000;"></div>
<div class="a" style="left:610px;top:443px;width:1px;height:2px;background:#000;"></div>
<div class="a rl" style="left:603px;top:440px;width:30px;text-align:center;transform:scaleX(0.8)">70</div>
<div class="a" style="left:626px;top:443px;width:1px;height:2px;background:#000;"></div>
<div class="a" style="left:634px;top:443px;width:1px;height:2px;background:#000;"></div>
<div class="a" style="left:642px;top:443px;width:1px;height:2px;background:#000;"></div>
<div class="a" style="left:650px;top:443px;width:1px;height:2px;background:#000;"></div>
<div class="a" style="left:658px;top:442px;width:1px;height:4px;background:#000;"></div>
<div class="a" style="left:666px;top:443px;width:1px;height:2px;background:#000;"></div>
<div class="a" style="left:674px;top:443px;width:1px;height:2px;background:#000;"></div>
<div class="a" style="left:682px;top:443px;width:1px;height:2px;background:#000;"></div>
<div class="a" style="left:690px;top:443px;width:1px;height:2px;background:#000;"></div>
<div class="a rl" style="left:683px;top:440px;width:30px;text-align:center;transform:scaleX(0.8)">80</div>
<div class="a" style="left:706px;top:443px;width:1px;height:2px;background:#000;"></div>
<div class="a" style="left:714px;top:443px;width:1px;height:2px;background:#000;"></div>
<div class="a" style="left:722px;top:443px;width:1px;height:2px;background:#000;"></div>
<div class="a" style="left:730px;top:443px;width:1px;height:2px;background:#000;"></div>
<div class="a" style="left:738px;top:442px;width:1px;height:4px;background:#000;"></div>
<div class="a" style="left:746px;top:443px;width:1px;height:2px;background:#000;"></div>
<div class="a" style="left:754px;top:443px;width:1px;height:2px;background:#000;"></div>
<div class="a" style="left:762px;top:443px;width:1px;height:2px;background:#000;"></div>
<div class="a" style="left:770px;top:443px;width:1px;height:2px;background:#000;"></div>
<div class="a rl" style="left:763px;top:440px;width:30px;text-align:center;transform:scaleX(0.8)">90</div>
<div class="a" style="left:786px;top:443px;width:1px;height:2px;background:#000;"></div>
<div class="a" style="left:794px;top:443px;width:1px;height:2px;background:#000;"></div>
<div class="a" style="left:802px;top:443px;width:1px;height:2px;background:#000;"></div>
<div class="a" style="left:810px;top:443px;width:1px;height:2px;background:#000;"></div>
<div class="a" style="left:818px;top:442px;width:1px;height:4px;background:#000;"></div>
<div class="a" style="left:826px;top:443px;width:1px;height:2px;background:#000;"></div>
<div class="a" style="left:834px;top:443px;width:1px;height:2px;background:#000;"></div>
<div class="a" style="left:842px;top:443px;width:1px;height:2px;background:#000;"></div>
<div class="a" style="left:850px;top:443px;width:1px;height:2px;background:#000;"></div>
<div class="a rl" style="left:843px;top:440px;width:30px;text-align:center;transform:scaleX(0.8)">100</div>
<div class="a" style="left:866px;top:443px;width:1px;height:2px;background:#000;"></div>
<div class="a" style="left:874px;top:443px;width:1px;height:2px;background:#000;"></div>
<div class="a" style="left:882px;top:443px;width:1px;height:2px;background:#000;"></div>
<div class="a" style="left:890px;top:443px;width:1px;height:2px;background:#000;"></div>
<div class="a" style="left:898px;top:442px;width:1px;height:4px;background:#000;"></div>
<div class="a" style="left:906px;top:443px;width:1px;height:2px;background:#000;"></div>
<div class="a" style="left:914px;top:443px;width:1px;height:2px;background:#000;"></div>
<div class="a" style="left:922px;top:443px;width:1px;height:2px;background:#000;"></div>
<div class="a" style="left:930px;top:443px;width:1px;height:2px;background:#000;"></div>
<div class="a rl" style="left:923px;top:440px;width:30px;text-align:center;transform:scaleX(0.8)">110</div>
<div class="a" style="left:946px;top:443px;width:1px;height:2px;background:#000;"></div>
<div class="a" style="left:954px;top:443px;width:1px;height:2px;background:#000;"></div>
<div class="a" style="left:962px;top:443px;width:1px;height:2px;background:#000;"></div>
<div class="a" style="left:970px;top:443px;width:1px;height:2px;background:#000;"></div>
<div class="a" style="left:978px;top:442px;width:1px;height:4px;background:#000;"></div>
<div class="a" style="left:986px;top:443px;width:1px;height:2px;background:#000;"></div>
<div class="a" style="left:994px;top:443px;width:1px;height:2px;background:#000;"></div>
<div class="a" style="left:1002px;top:443px;width:1px;height:2px;background:#000;"></div>
<div class="a" style="left:1010px;top:443px;width:1px;height:2px;background:#000;"></div>
<div class="a rl" style="left:1003px;top:440px;width:30px;text-align:center;transform:scaleX(0.8)">120</div>
<div class="a" style="left:1026px;top:443px;width:1px;height:2px;background:#000;"></div>
<div class="a" style="left:1034px;top:443px;width:1px;height:2px;background:#000;"></div>
<div class="a" style="left:1042px;top:443px;width:1px;height:2px;background:#000;"></div>
<div class="a" style="left:1050px;top:443px;width:1px;height:2px;background:#000;"></div>
<div class="a" style="left:1058px;top:442px;width:1px;height:4px;background:#000;"></div>
<div class="a" style="left:1066px;top:443px;width:1px;height:2px;background:#000;"></div>
<div class="a" style="left:1074px;top:443px;width:1px;height:2px;background:#000;"></div>
<div class="a" style="left:1082px;top:443px;width:1px;height:2px;background:#000;"></div>
<div class="a" style="left:1090px;top:443px;width:1px;height:2px;background:#000;"></div>
<div class="a rl" style="left:1083px;top:440px;width:30px;text-align:center;transform:scaleX(0.8)">130</div>
<div class="a" style="left:1106px;top:443px;width:1px;height:2px;background:#000;"></div>
<div class="a" style="left:1114px;top:443px;width:1px;height:2px;background:#000;"></div>
<div class="a" style="left:1122px;top:443px;width:1px;height:2px;background:#000;"></div>
<div class="a" style="left:1130px;top:443px;width:1px;height:2px;background:#000;"></div>
<div class="a" style="left:1138px;top:442px;width:1px;height:4px;background:#000;"></div>
<div class="a" style="left:1146px;top:443px;width:1px;height:2px;background:#000;"></div>
<div class="a" style="left:1154px;top:443px;width:1px;height:2px;background:#000;"></div>
<div class="a" style="left:1162px;top:443px;width:1px;height:2px;background:#000;"></div>
<div class="a" style="left:1170px;top:443px;width:1px;height:2px;background:#000;"></div>
<div class="a rl" style="left:1163px;top:440px;width:30px;text-align:center;transform:scaleX(0.8)">140</div>
<div class="a" style="left:1186px;top:443px;width:1px;height:2px;background:#000;"></div>
<div class="a" style="left:1194px;top:443px;width:1px;height:2px;background:#000;"></div>
<div class="a" style="left:1202px;top:443px;width:1px;height:2px;background:#000;"></div>
<div class="a" style="left:1210px;top:443px;width:1px;height:2px;background:#000;"></div>
<div class="a" style="left:1218px;top:442px;width:1px;height:4px;background:#000;"></div>
<div class="a" style="left:1226px;top:443px;width:1px;height:2px;background:#000;"></div>
<div class="a" style="left:1234px;top:443px;width:1px;height:2px;background:#000;"></div>
<div class="a" style="left:1242px;top:443px;width:1px;height:2px;background:#000;"></div>
<div class="a" style="left:1250px;top:443px;width:1px;height:2px;background:#000;"></div>
<div class="a rl" style="left:1243px;top:440px;width:30px;text-align:center;transform:scaleX(0.8)">150</div>
<div class="a" style="left:1260px;top:438px;width:19px;height:12px;background:#ECE9D8;"></div>
<div class="a" style="left:1279px;top:438px;width:1px;height:12px;background:#ACA899;"></div>
<div class="a" style="left:0px;top:86px;width:1280px;height:333px;background:#ACA899;"></div>
<div class="a" style="left:1px;top:87px;width:1279px;height:332px;background:#716F64;"></div>
<div class="a" style="left:1278px;top:86px;width:2px;height:333px;background:#F1EFE2;"></div>
<div class="a" style="left:1279px;top:86px;width:1px;height:333px;background:#fff;"></div>
<div class="a" style="left:0px;top:417px;width:1280px;height:2px;background:#F1EFE2;"></div>
<div class="a" style="left:0px;top:418px;width:1280px;height:1px;background:#fff;"></div>
<div class="a" style="left:2px;top:88px;width:1276px;height:329px;background:#fff;"></div>
<div class="a" style="left:0px;top:450px;width:1280px;height:228px;background:#ACA899;"></div>
<div class="a" style="left:1px;top:451px;width:1279px;height:227px;background:#716F64;"></div>
<div class="a" style="left:1278px;top:450px;width:2px;height:228px;background:#F1EFE2;"></div>
<div class="a" style="left:1279px;top:450px;width:1px;height:228px;background:#fff;"></div>
<div class="a" style="left:0px;top:676px;width:1280px;height:2px;background:#F1EFE2;"></div>
<div class="a" style="left:0px;top:677px;width:1280px;height:1px;background:#fff;"></div>
<div class="a" style="left:2px;top:452px;width:1276px;height:224px;background:#fff;"></div>
<div class="a code" style="left:46px;top:89px;transform:scaleX(0.7018)">1</div>
<div class="a code" style="left:62px;top:89px;color:#000;transform:scaleX(0.7018)">¥documentclass[12pt,a4paper]{jsarticle}</div>
<svg class="a" style="left:376px;top:96px" width="4" height="9" shape-rendering="crispEdges"><rect x="0" y="0" width="3" height="1" fill="#808000"/><rect x="0" y="1" width="1" height="1" fill="#808000"/><rect x="2" y="1" width="1" height="1" fill="#808000"/><rect x="0" y="2" width="1" height="1" fill="#808000"/><rect x="2" y="2" width="1" height="1" fill="#808000"/><rect x="0" y="3" width="1" height="1" fill="#808000"/><rect x="2" y="3" width="1" height="1" fill="#808000"/><rect x="0" y="4" width="1" height="1" fill="#808000"/><rect x="2" y="4" width="1" height="1" fill="#808000"/><rect x="0" y="5" width="1" height="1" fill="#808000"/><rect x="2" y="5" width="2" height="1" fill="#808000"/><rect x="0" y="6" width="1" height="1" fill="#808000"/><rect x="2" y="6" width="1" height="1" fill="#808000"/><rect x="0" y="7" width="2" height="1" fill="#808000"/><rect x="0" y="8" width="1" height="1" fill="#808000"/></svg>
<div class="a code" style="left:46px;top:107px;transform:scaleX(0.7018)">2</div>
<div class="a code" style="left:62px;top:107px;color:#0000FF;transform:scaleX(0.7018)">¥begin{document}</div>
<svg class="a" style="left:192px;top:114px" width="4" height="9" shape-rendering="crispEdges"><rect x="0" y="0" width="3" height="1" fill="#808000"/><rect x="0" y="1" width="1" height="1" fill="#808000"/><rect x="2" y="1" width="1" height="1" fill="#808000"/><rect x="0" y="2" width="1" height="1" fill="#808000"/><rect x="2" y="2" width="1" height="1" fill="#808000"/><rect x="0" y="3" width="1" height="1" fill="#808000"/><rect x="2" y="3" width="1" height="1" fill="#808000"/><rect x="0" y="4" width="1" height="1" fill="#808000"/><rect x="2" y="4" width="1" height="1" fill="#808000"/><rect x="0" y="5" width="1" height="1" fill="#808000"/><rect x="2" y="5" width="2" height="1" fill="#808000"/><rect x="0" y="6" width="1" height="1" fill="#808000"/><rect x="2" y="6" width="1" height="1" fill="#808000"/><rect x="0" y="7" width="2" height="1" fill="#808000"/><rect x="0" y="8" width="1" height="1" fill="#808000"/></svg>
<div class="a code" style="left:46px;top:125px;transform:scaleX(0.7018)">3</div>
<div class="a code" style="left:62px;top:125px;color:#000;transform:scaleX(0.7018)">Test</div>
<svg class="a" style="left:96px;top:132px" width="4" height="9" shape-rendering="crispEdges"><rect x="0" y="0" width="3" height="1" fill="#808000"/><rect x="0" y="1" width="1" height="1" fill="#808000"/><rect x="2" y="1" width="1" height="1" fill="#808000"/><rect x="0" y="2" width="1" height="1" fill="#808000"/><rect x="2" y="2" width="1" height="1" fill="#808000"/><rect x="0" y="3" width="1" height="1" fill="#808000"/><rect x="2" y="3" width="1" height="1" fill="#808000"/><rect x="0" y="4" width="1" height="1" fill="#808000"/><rect x="2" y="4" width="1" height="1" fill="#808000"/><rect x="0" y="5" width="1" height="1" fill="#808000"/><rect x="2" y="5" width="2" height="1" fill="#808000"/><rect x="0" y="6" width="1" height="1" fill="#808000"/><rect x="2" y="6" width="1" height="1" fill="#808000"/><rect x="0" y="7" width="2" height="1" fill="#808000"/><rect x="0" y="8" width="1" height="1" fill="#808000"/></svg>
<div class="a code" style="left:46px;top:143px;transform:scaleX(0.7018)">4</div>
<div class="a code" style="left:62px;top:143px;color:#0000FF;transform:scaleX(0.7018)">¥end</div>
<div class="a code" style="left:94px;top:143px;color:#000;transform:scaleX(0.7018)">{documen}</div>
<svg class="a" style="left:168px;top:150px" width="4" height="9" shape-rendering="crispEdges"><rect x="0" y="0" width="3" height="1" fill="#808000"/><rect x="0" y="1" width="1" height="1" fill="#808000"/><rect x="2" y="1" width="1" height="1" fill="#808000"/><rect x="0" y="2" width="1" height="1" fill="#808000"/><rect x="2" y="2" width="1" height="1" fill="#808000"/><rect x="0" y="3" width="1" height="1" fill="#808000"/><rect x="2" y="3" width="1" height="1" fill="#808000"/><rect x="0" y="4" width="1" height="1" fill="#808000"/><rect x="2" y="4" width="1" height="1" fill="#808000"/><rect x="0" y="5" width="1" height="1" fill="#808000"/><rect x="2" y="5" width="2" height="1" fill="#808000"/><rect x="0" y="6" width="1" height="1" fill="#808000"/><rect x="2" y="6" width="1" height="1" fill="#808000"/><rect x="0" y="7" width="2" height="1" fill="#808000"/><rect x="0" y="8" width="1" height="1" fill="#808000"/></svg>
<div class="a code" style="left:46px;top:161px;transform:scaleX(0.7018)">5</div>
<div class="a code" style="left:62px;top:161px;color:#808000;transform:scaleX(0.7018)">[EOF]</div>
<div class="a" style="left:56px;top:88px;width:1px;height:90px;background:#000;"></div>
<div class="a code" style="left:46px;top:453px;transform:scaleX(0.7018)">8</div>
<div class="a code" style="left:62px;top:453px;color:#000;transform:scaleX(0.7018)">! LaTeX Error: ¥begin{document} ended by ¥end{documen}.</div>
<svg class="a" style="left:504px;top:460px" width="4" height="9" shape-rendering="crispEdges"><rect x="0" y="0" width="3" height="1" fill="#808000"/><rect x="0" y="1" width="1" height="1" fill="#808000"/><rect x="2" y="1" width="1" height="1" fill="#808000"/><rect x="0" y="2" width="1" height="1" fill="#808000"/><rect x="2" y="2" width="1" height="1" fill="#808000"/><rect x="0" y="3" width="1" height="1" fill="#808000"/><rect x="2" y="3" width="1" height="1" fill="#808000"/><rect x="0" y="4" width="1" height="1" fill="#808000"/><rect x="2" y="4" width="1" height="1" fill="#808000"/><rect x="0" y="5" width="1" height="1" fill="#808000"/><rect x="2" y="5" width="2" height="1" fill="#808000"/><rect x="0" y="6" width="1" height="1" fill="#808000"/><rect x="2" y="6" width="1" height="1" fill="#808000"/><rect x="0" y="7" width="2" height="1" fill="#808000"/><rect x="0" y="8" width="1" height="1" fill="#808000"/></svg>
<div class="a code" style="left:46px;top:471px;transform:scaleX(0.7018)">9</div>
<svg class="a" style="left:64px;top:478px" width="4" height="9" shape-rendering="crispEdges"><rect x="0" y="0" width="3" height="1" fill="#808000"/><rect x="0" y="1" width="1" height="1" fill="#808000"/><rect x="2" y="1" width="1" height="1" fill="#808000"/><rect x="0" y="2" width="1" height="1" fill="#808000"/><rect x="2" y="2" width="1" height="1" fill="#808000"/><rect x="0" y="3" width="1" height="1" fill="#808000"/><rect x="2" y="3" width="1" height="1" fill="#808000"/><rect x="0" y="4" width="1" height="1" fill="#808000"/><rect x="2" y="4" width="1" height="1" fill="#808000"/><rect x="0" y="5" width="1" height="1" fill="#808000"/><rect x="2" y="5" width="2" height="1" fill="#808000"/><rect x="0" y="6" width="1" height="1" fill="#808000"/><rect x="2" y="6" width="1" height="1" fill="#808000"/><rect x="0" y="7" width="2" height="1" fill="#808000"/><rect x="0" y="8" width="1" height="1" fill="#808000"/></svg>
<div class="a code" style="left:38px;top:489px;transform:scaleX(0.7018)">10</div>
<div class="a code" style="left:62px;top:489px;color:#000;transform:scaleX(0.7018)">See the LaTeX manual or LaTeX Companion for explanation.</div>
<svg class="a" style="left:512px;top:496px" width="4" height="9" shape-rendering="crispEdges"><rect x="0" y="0" width="3" height="1" fill="#808000"/><rect x="0" y="1" width="1" height="1" fill="#808000"/><rect x="2" y="1" width="1" height="1" fill="#808000"/><rect x="0" y="2" width="1" height="1" fill="#808000"/><rect x="2" y="2" width="1" height="1" fill="#808000"/><rect x="0" y="3" width="1" height="1" fill="#808000"/><rect x="2" y="3" width="1" height="1" fill="#808000"/><rect x="0" y="4" width="1" height="1" fill="#808000"/><rect x="2" y="4" width="1" height="1" fill="#808000"/><rect x="0" y="5" width="1" height="1" fill="#808000"/><rect x="2" y="5" width="2" height="1" fill="#808000"/><rect x="0" y="6" width="1" height="1" fill="#808000"/><rect x="2" y="6" width="1" height="1" fill="#808000"/><rect x="0" y="7" width="2" height="1" fill="#808000"/><rect x="0" y="8" width="1" height="1" fill="#808000"/></svg>
<div class="a code" style="left:38px;top:507px;transform:scaleX(0.7018)">11</div>
<div class="a code" style="left:62px;top:507px;color:#000;transform:scaleX(0.7018)">Type  H &lt;return&gt;  for immediate help.</div>
<svg class="a" style="left:360px;top:514px" width="4" height="9" shape-rendering="crispEdges"><rect x="0" y="0" width="3" height="1" fill="#808000"/><rect x="0" y="1" width="1" height="1" fill="#808000"/><rect x="2" y="1" width="1" height="1" fill="#808000"/><rect x="0" y="2" width="1" height="1" fill="#808000"/><rect x="2" y="2" width="1" height="1" fill="#808000"/><rect x="0" y="3" width="1" height="1" fill="#808000"/><rect x="2" y="3" width="1" height="1" fill="#808000"/><rect x="0" y="4" width="1" height="1" fill="#808000"/><rect x="2" y="4" width="1" height="1" fill="#808000"/><rect x="0" y="5" width="1" height="1" fill="#808000"/><rect x="2" y="5" width="2" height="1" fill="#808000"/><rect x="0" y="6" width="1" height="1" fill="#808000"/><rect x="2" y="6" width="1" height="1" fill="#808000"/><rect x="0" y="7" width="2" height="1" fill="#808000"/><rect x="0" y="8" width="1" height="1" fill="#808000"/></svg>
<div class="a code" style="left:38px;top:525px;transform:scaleX(0.7018)">12</div>
<div class="a code" style="left:62px;top:525px;color:#000;transform:scaleX(0.7018)"> ...                                              </div>
<svg class="a" style="left:464px;top:532px" width="4" height="9" shape-rendering="crispEdges"><rect x="0" y="0" width="3" height="1" fill="#808000"/><rect x="0" y="1" width="1" height="1" fill="#808000"/><rect x="2" y="1" width="1" height="1" fill="#808000"/><rect x="0" y="2" width="1" height="1" fill="#808000"/><rect x="2" y="2" width="1" height="1" fill="#808000"/><rect x="0" y="3" width="1" height="1" fill="#808000"/><rect x="2" y="3" width="1" height="1" fill="#808000"/><rect x="0" y="4" width="1" height="1" fill="#808000"/><rect x="2" y="4" width="1" height="1" fill="#808000"/><rect x="0" y="5" width="1" height="1" fill="#808000"/><rect x="2" y="5" width="2" height="1" fill="#808000"/><rect x="0" y="6" width="1" height="1" fill="#808000"/><rect x="2" y="6" width="1" height="1" fill="#808000"/><rect x="0" y="7" width="2" height="1" fill="#808000"/><rect x="0" y="8" width="1" height="1" fill="#808000"/></svg>
<div class="a code" style="left:38px;top:543px;transform:scaleX(0.7018)">13</div>
<div class="a code" style="left:62px;top:543px;color:#000;transform:scaleX(0.7018)">                                                  </div>
<svg class="a" style="left:464px;top:550px" width="4" height="9" shape-rendering="crispEdges"><rect x="0" y="0" width="3" height="1" fill="#808000"/><rect x="0" y="1" width="1" height="1" fill="#808000"/><rect x="2" y="1" width="1" height="1" fill="#808000"/><rect x="0" y="2" width="1" height="1" fill="#808000"/><rect x="2" y="2" width="1" height="1" fill="#808000"/><rect x="0" y="3" width="1" height="1" fill="#808000"/><rect x="2" y="3" width="1" height="1" fill="#808000"/><rect x="0" y="4" width="1" height="1" fill="#808000"/><rect x="2" y="4" width="1" height="1" fill="#808000"/><rect x="0" y="5" width="1" height="1" fill="#808000"/><rect x="2" y="5" width="2" height="1" fill="#808000"/><rect x="0" y="6" width="1" height="1" fill="#808000"/><rect x="2" y="6" width="1" height="1" fill="#808000"/><rect x="0" y="7" width="2" height="1" fill="#808000"/><rect x="0" y="8" width="1" height="1" fill="#808000"/></svg>
<div class="a code" style="left:38px;top:561px;transform:scaleX(0.7018)">14</div>
<div class="a code" style="left:62px;top:561px;color:#000;transform:scaleX(0.7018)">l.4 ¥end{documen}</div>
<svg class="a" style="left:200px;top:568px" width="4" height="9" shape-rendering="crispEdges"><rect x="0" y="0" width="3" height="1" fill="#808000"/><rect x="0" y="1" width="1" height="1" fill="#808000"/><rect x="2" y="1" width="1" height="1" fill="#808000"/><rect x="0" y="2" width="1" height="1" fill="#808000"/><rect x="2" y="2" width="1" height="1" fill="#808000"/><rect x="0" y="3" width="1" height="1" fill="#808000"/><rect x="2" y="3" width="1" height="1" fill="#808000"/><rect x="0" y="4" width="1" height="1" fill="#808000"/><rect x="2" y="4" width="1" height="1" fill="#808000"/><rect x="0" y="5" width="1" height="1" fill="#808000"/><rect x="2" y="5" width="2" height="1" fill="#808000"/><rect x="0" y="6" width="1" height="1" fill="#808000"/><rect x="2" y="6" width="1" height="1" fill="#808000"/><rect x="0" y="7" width="2" height="1" fill="#808000"/><rect x="0" y="8" width="1" height="1" fill="#808000"/></svg>
<div class="a code" style="left:38px;top:579px;transform:scaleX(0.7018)">15</div>
<div class="a code" style="left:62px;top:579px;color:#000;transform:scaleX(0.7018)">                 </div>
<svg class="a" style="left:200px;top:586px" width="4" height="9" shape-rendering="crispEdges"><rect x="0" y="0" width="3" height="1" fill="#808000"/><rect x="0" y="1" width="1" height="1" fill="#808000"/><rect x="2" y="1" width="1" height="1" fill="#808000"/><rect x="0" y="2" width="1" height="1" fill="#808000"/><rect x="2" y="2" width="1" height="1" fill="#808000"/><rect x="0" y="3" width="1" height="1" fill="#808000"/><rect x="2" y="3" width="1" height="1" fill="#808000"/><rect x="0" y="4" width="1" height="1" fill="#808000"/><rect x="2" y="4" width="1" height="1" fill="#808000"/><rect x="0" y="5" width="1" height="1" fill="#808000"/><rect x="2" y="5" width="2" height="1" fill="#808000"/><rect x="0" y="6" width="1" height="1" fill="#808000"/><rect x="2" y="6" width="1" height="1" fill="#808000"/><rect x="0" y="7" width="2" height="1" fill="#808000"/><rect x="0" y="8" width="1" height="1" fill="#808000"/></svg>
<div class="a code" style="left:38px;top:597px;transform:scaleX(0.7018)">16</div>
<div class="a code" style="left:62px;top:597px;color:#000;transform:scaleX(0.7018)">? </div>
<div class="a code" style="left:78px;top:597px;color:#808000;transform:scaleX(0.7018)">[EOF]</div>
<div class="a" style="left:56px;top:452px;width:1px;height:162px;background:#000;"></div>
<div class="a" style="left:1262px;top:88px;width:16px;height:329px;background:linear-gradient(to right,#F3F1EA,#FEFEFB 60%,#F0EFE6);"></div>
<div class="a" style="left:1262px;top:88px;width:15px;height:16px;border:1px solid #fff;border-radius:3px;background:linear-gradient(to bottom,#D0DCB8 0%,#B4C29A 35%,#A3B288 100%);box-shadow:inset 0 0 0 1px #8E9D72"></div>
<div class="a" style="left:1262px;top:104px;width:15px;height:1px;background:#8FBF6A;"></div>
<svg class="a" style="left:1265px;top:93px" width="10" height="6" shape-rendering="crispEdges"><rect x="4" y="0" width="2" height="1" fill="#FFFFFF"/><rect x="3" y="1" width="4" height="1" fill="#FFFFFF"/><rect x="2" y="2" width="6" height="1" fill="#FFFFFF"/><rect x="1" y="3" width="3" height="1" fill="#FFFFFF"/><rect x="6" y="3" width="3" height="1" fill="#FFFFFF"/><rect x="0" y="4" width="3" height="1" fill="#FFFFFF"/><rect x="7" y="4" width="3" height="1" fill="#FFFFFF"/><rect x="0" y="5" width="2" height="1" fill="#FFFFFF"/><rect x="8" y="5" width="2" height="1" fill="#FFFFFF"/></svg>
<div class="a" style="left:1262px;top:105px;width:15px;height:241px;border:1px solid #fff;border-radius:2px;background:linear-gradient(to right,#B5C39A,#A6B58B 30%,#9EAE83 80%,#93A277);box-shadow:inset 0 0 0 1px #8C9B70"></div>
<div class="a" style="left:1267px;top:222px;width:6px;height:1px;background:#C8D3B4;"></div>
<div class="a" style="left:1267px;top:224px;width:6px;height:1px;background:#C8D3B4;"></div>
<div class="a" style="left:1267px;top:226px;width:6px;height:1px;background:#C8D3B4;"></div>
<div class="a" style="left:1267px;top:228px;width:6px;height:1px;background:#C8D3B4;"></div>
<div class="a" style="left:1262px;top:400px;width:15px;height:16px;border:1px solid #fff;border-radius:3px;background:linear-gradient(to bottom,#D0DCB8 0%,#B4C29A 35%,#A3B288 100%);box-shadow:inset 0 0 0 1px #8E9D72"></div>
<div class="a" style="left:1262px;top:416px;width:15px;height:1px;background:#8FBF6A;"></div>
<svg class="a" style="left:1265px;top:406px" width="10" height="6" shape-rendering="crispEdges"><rect x="0" y="0" width="2" height="1" fill="#FFFFFF"/><rect x="8" y="0" width="2" height="1" fill="#FFFFFF"/><rect x="0" y="1" width="3" height="1" fill="#FFFFFF"/><rect x="7" y="1" width="3" height="1" fill="#FFFFFF"/><rect x="1" y="2" width="3" height="1" fill="#FFFFFF"/><rect x="6" y="2" width="3" height="1" fill="#FFFFFF"/><rect x="2" y="3" width="6" height="1" fill="#FFFFFF"/><rect x="3" y="4" width="4" height="1" fill="#FFFFFF"/><rect x="4" y="5" width="2" height="1" fill="#FFFFFF"/></svg>
<div class="a" style="left:1262px;top:452px;width:16px;height:224px;background:linear-gradient(to right,#F3F1EA,#FEFEFB 60%,#F0EFE6);"></div>
<div class="a" style="left:1262px;top:452px;width:15px;height:16px;border:1px solid #fff;border-radius:3px;background:linear-gradient(to bottom,#D0DCB8 0%,#B4C29A 35%,#A3B288 100%);box-shadow:inset 0 0 0 1px #8E9D72"></div>
<div class="a" style="left:1262px;top:468px;width:15px;height:1px;background:#8FBF6A;"></div>
<svg class="a" style="left:1265px;top:457px" width="10" height="6" shape-rendering="crispEdges"><rect x="4" y="0" width="2" height="1" fill="#FFFFFF"/><rect x="3" y="1" width="4" height="1" fill="#FFFFFF"/><rect x="2" y="2" width="6" height="1" fill="#FFFFFF"/><rect x="1" y="3" width="3" height="1" fill="#FFFFFF"/><rect x="6" y="3" width="3" height="1" fill="#FFFFFF"/><rect x="0" y="4" width="3" height="1" fill="#FFFFFF"/><rect x="7" y="4" width="3" height="1" fill="#FFFFFF"/><rect x="0" y="5" width="2" height="1" fill="#FFFFFF"/><rect x="8" y="5" width="2" height="1" fill="#FFFFFF"/></svg>
<div class="a" style="left:1262px;top:518px;width:15px;height:83px;border:1px solid #fff;border-radius:2px;background:linear-gradient(to right,#B5C39A,#A6B58B 30%,#9EAE83 80%,#93A277);box-shadow:inset 0 0 0 1px #8C9B70"></div>
<div class="a" style="left:1267px;top:556px;width:6px;height:1px;background:#C8D3B4;"></div>
<div class="a" style="left:1267px;top:558px;width:6px;height:1px;background:#C8D3B4;"></div>
<div class="a" style="left:1267px;top:560px;width:6px;height:1px;background:#C8D3B4;"></div>
<div class="a" style="left:1267px;top:562px;width:6px;height:1px;background:#C8D3B4;"></div>
<div class="a" style="left:1262px;top:659px;width:15px;height:16px;border:1px solid #fff;border-radius:3px;background:linear-gradient(to bottom,#D0DCB8 0%,#B4C29A 35%,#A3B288 100%);box-shadow:inset 0 0 0 1px #8E9D72"></div>
<div class="a" style="left:1262px;top:675px;width:15px;height:1px;background:#8FBF6A;"></div>
<svg class="a" style="left:1265px;top:665px" width="10" height="6" shape-rendering="crispEdges"><rect x="0" y="0" width="2" height="1" fill="#FFFFFF"/><rect x="8" y="0" width="2" height="1" fill="#FFFFFF"/><rect x="0" y="1" width="3" height="1" fill="#FFFFFF"/><rect x="7" y="1" width="3" height="1" fill="#FFFFFF"/><rect x="1" y="2" width="3" height="1" fill="#FFFFFF"/><rect x="6" y="2" width="3" height="1" fill="#FFFFFF"/><rect x="2" y="3" width="6" height="1" fill="#FFFFFF"/><rect x="3" y="4" width="4" height="1" fill="#FFFFFF"/><rect x="4" y="5" width="2" height="1" fill="#FFFFFF"/></svg>
<div class="a" style="left:0px;top:419px;width:1280px;height:1px;background:#fff;"></div>
<div class="a" style="left:0px;top:420px;width:1280px;height:14px;background:#ECE9D8;"></div>
<div class="a" style="left:0px;top:420px;width:1px;height:14px;background:#fff;"></div>
<div class="a" style="left:0px;top:434px;width:1280px;height:1px;background:#716F64;"></div>
<div class="a" style="left:1279px;top:420px;width:1px;height:15px;background:#716F64;"></div>
<div class="a" style="left:0px;top:435px;width:1280px;height:2px;background:#F3F1E6;"></div>
<div class="a" style="left:0px;top:437px;width:1280px;height:1px;background:#fff;"></div>
<div class="a ui" id="ml1a" style="transform:scaleX(0.9488);left:5px;top:420px">−−−−− test.tex (かてふ:Fill) [sjis:crlf]</div>
<div class="a ui" id="ml1b" style="transform:scaleX(0.7191);left:225px;top:420px">4:1</div>
<div class="a ui" id="ml1c" style="transform:scaleX(0.9824);left:279px;top:420px">File: C:/Documents and Settings/moriwaki/My Documents/test.tex</div>
<div class="a" style="left:0px;top:678px;width:1280px;height:1px;background:#fff;"></div>
<div class="a" style="left:0px;top:679px;width:1280px;height:17px;background:#ECE9D8;"></div>
<div class="a" style="left:0px;top:679px;width:1px;height:14px;background:#fff;"></div>
<div class="a" style="left:1px;top:679px;width:1279px;height:14px;background:#000;"></div>
<div class="a ui" id="ml2a" style="transform:scaleX(0.9754);left:5px;top:679px;color:#fff">−−<span class=st>**</span>− <span class=st>*</span>KaTeX−typesetting<span class=st>*</span> (typeset:Run) [sjis:crlf]</div>
<div class="a ui" id="ml2b" style="transform:scaleX(0.8562);left:301px;top:679px;color:#fff">16:3</div>
<div class="a" style="left:0px;top:696px;width:1280px;height:1px;background:#ACA899;"></div>
<div class="a" style="left:1px;top:697px;width:1279px;height:1px;background:#716F64;"></div>
<div class="a" style="left:1px;top:697px;width:1px;height:20px;background:#716F64;"></div>
<div class="a" style="left:0px;top:696px;width:1px;height:21px;background:#ACA899;"></div>
<div class="a" style="left:2px;top:698px;width:1276px;height:18px;background:#fff;"></div>
<div class="a" style="left:1278px;top:697px;width:2px;height:20px;background:#F1EFE2;"></div>
<div class="a" style="left:0px;top:716px;width:1280px;height:1px;background:#F1EFE2;"></div>
<div class="a" style="left:0px;top:717px;width:1280px;height:1px;background:#fff;"></div>
<div class="a" style="left:0;top:720px;width:1207px;height:17px;border-left:1px solid #ACA899;border-top:1px solid #ACA899;background:#ECE9D8"></div>
<div class="a" style="left:1207px;top:720px;width:2px;height:17px;background:#fff;"></div>
<div class="a" style="left:1210px;top:720px;width:70px;height:17px;border-left:1px solid #ACA899;border-top:1px solid #ACA899;background:#ECE9D8"></div>
<div class="a ui" id="st1" style="transform:scaleX(0.9692);left:3px;top:722px">LaTeX error in `./test.tex' on line: 4.</div>
<div class="a ui" id="st2" style="transform:scaleX(0.9463);left:1215px;top:722px">03/18 13:57</div>
<div class="a" style="left:0px;top:737px;width:1280px;height:1px;background:#fff;"></div>
<div class="a" style="left:0px;top:738px;width:106px;height:4px;background:linear-gradient(to bottom,#3B6A2A 0,#3B6A2A 1px,#9CC080 1px,#C3DBA6 4px);"></div>
<div class="a" style="left:106px;top:738px;width:1083px;height:4px;background:linear-gradient(to bottom,#8FA877 0,#8FA877 1px,#E6F0C8 1px,#D5E3B4 4px);"></div>
<div class="a" style="left:120px;top:739px;width:1px;height:3px;background:#B9CC9E;"></div>
<div class="a" style="left:240px;top:739px;width:1px;height:3px;background:#B9CC9E;"></div>
<div class="a" style="left:362px;top:739px;width:1px;height:3px;background:#B9CC9E;"></div>
<div class="a" style="left:484px;top:739px;width:1px;height:3px;background:#B9CC9E;"></div>
<div class="a" style="left:605px;top:739px;width:1px;height:3px;background:#B9CC9E;"></div>
<div class="a" style="left:728px;top:739px;width:1px;height:3px;background:#B9CC9E;"></div>
<div class="a" style="left:850px;top:739px;width:1px;height:3px;background:#B9CC9E;"></div>
<div class="a" style="left:975px;top:739px;width:1px;height:3px;background:#B9CC9E;"></div>
<div class="a" style="left:1095px;top:739px;width:1px;height:3px;background:#B9CC9E;"></div>
<div class="a" style="left:1189px;top:738px;width:1px;height:4px;background:#A8904A;"></div>
<div class="a" style="left:1190px;top:738px;width:90px;height:4px;background:linear-gradient(to bottom,#B8A060 0,#B8A060 1px,#FFFBE0 1px,#F3E7B5 4px);"></div>
</body></html>
